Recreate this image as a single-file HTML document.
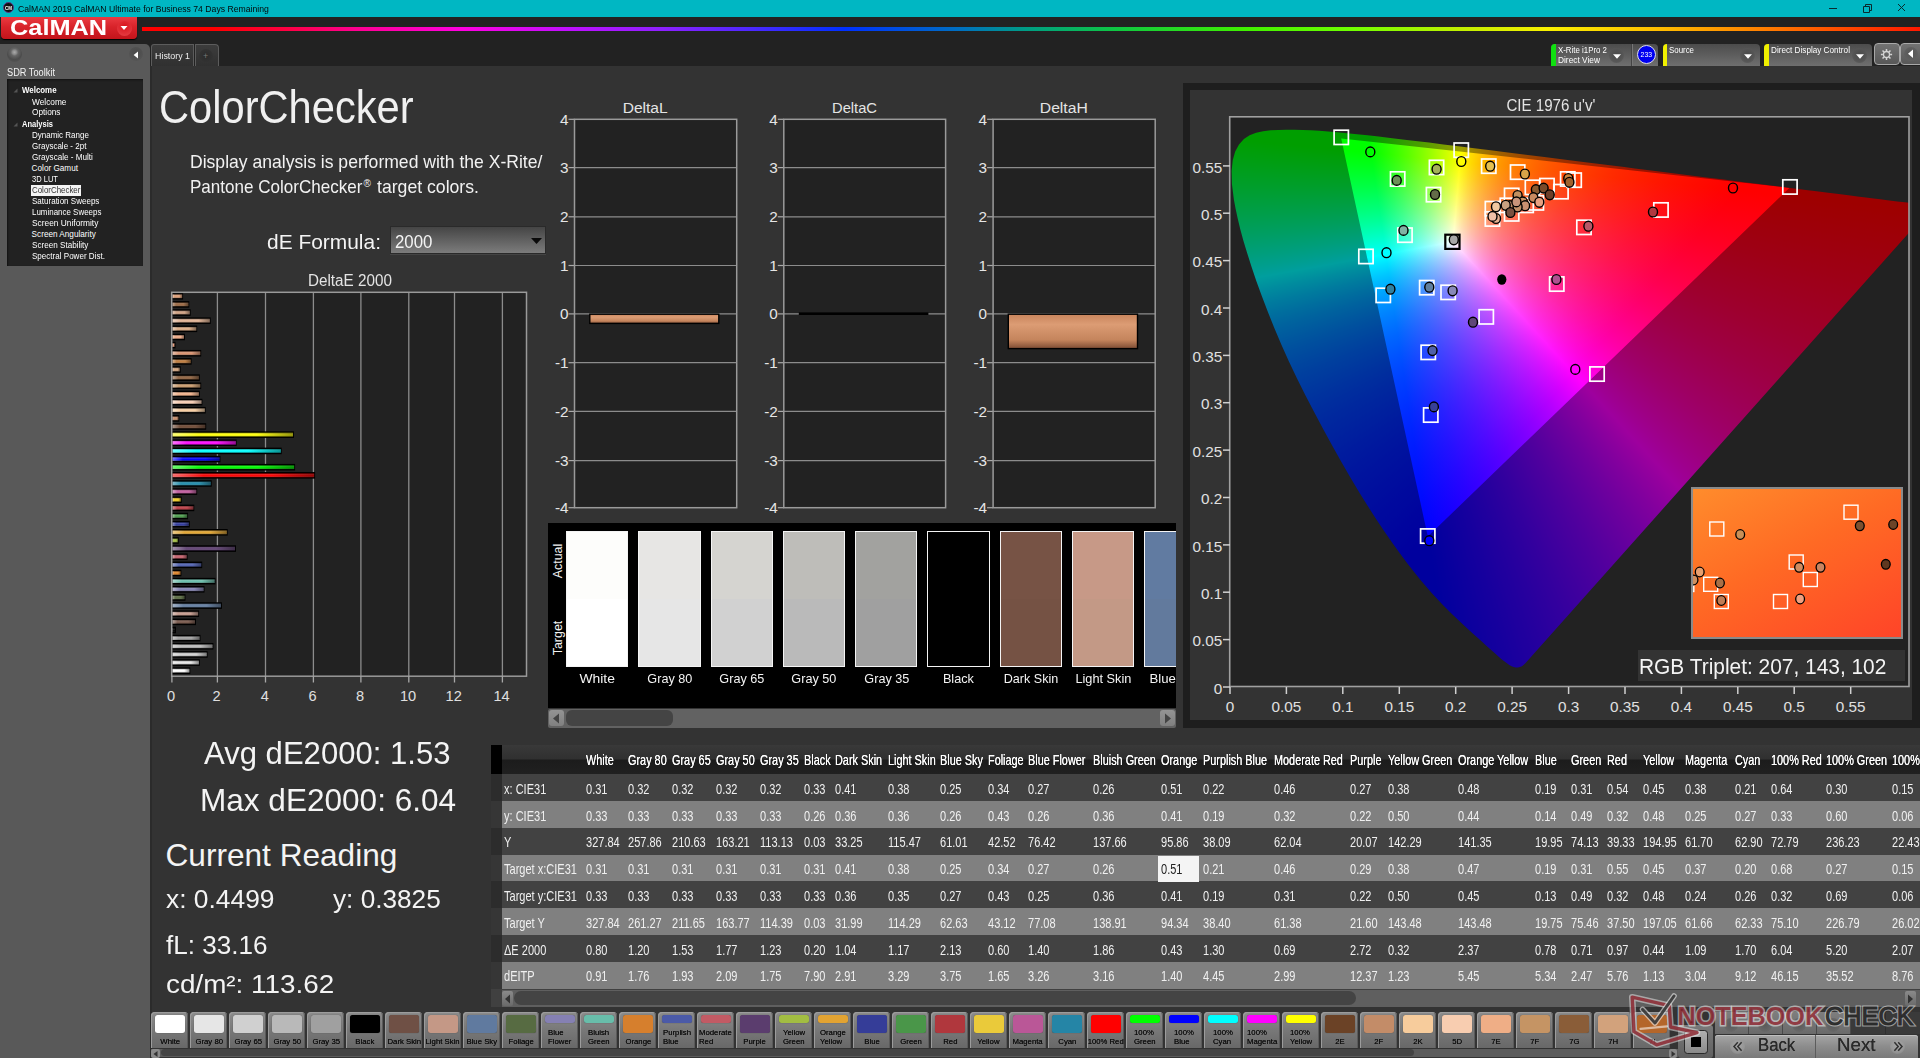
<!DOCTYPE html>
<html lang="en"><head><meta charset="utf-8"><title>CalMAN 2019 - ColorChecker</title>
<style>
html,body{margin:0;padding:0}
body{width:1920px;height:1058px;overflow:hidden;background:#333;font-family:"Liberation Sans",sans-serif;position:relative}
div,span,svg,section,nav,header,aside,button{position:absolute;box-sizing:border-box;margin:0;padding:0}
.t{white-space:nowrap;display:block}
button{border:none;font-family:inherit}
svg text{font-family:"Liberation Sans",sans-serif}
</style></head><body>

<header style="left:0;top:0;width:1920px;height:17px;background:#00b7c3">
<div style="left:3px;top:2px;width:11px;height:11px;border-radius:50%;background:#111;border:1px solid #5a3a8a"></div>
<span class="t" style="left:4.6px;top:6.0px;font-size:5.00px;line-height:5.00px;color:#fff;transform:scaleX(0.900);transform-origin:0 50%;font-weight:bold;">CM</span>
<span class="t" style="left:18.0px;top:5.0px;font-size:9.30px;line-height:9.30px;color:#04090a;transform:scaleX(0.932);transform-origin:0 50%;">CalMAN 2019 CalMAN Ultimate for Business 74 Days Remaining</span>
<svg style="left:1800px;top:0" width="120" height="17" viewBox="0 0 120 17"><g stroke="#0a2a2e" stroke-width="1" fill="none"><path d="M29 8.5h8"/><path d="M63.5 6.5h6v6h-6z M65.5 6.5v-2h6v6h-2"/><path d="M98 4l7 7M105 4l-7 7"/></g></svg>
</header>
<div style="left:0.0px;top:17.0px;width:1920.0px;height:49.0px;background:#222"></div>
<div class="logo" style="left:1.0px;top:17.0px;width:136.0px;height:22.0px;background:linear-gradient(#ea3b41,#d8232a 45%,#c3141b);border-radius:0 0 4px 4px;box-shadow:0 1px 1px #000"></div>
<span class="t" style="left:9.8px;top:17.2px;font-size:22.40px;line-height:22.40px;color:#fff;transform:scaleX(1.132);transform-origin:0 50%;font-weight:bold;">CalMAN</span>
<div style="left:116.5px;top:20.5px;width:15.0px;height:15.0px;border-radius:50%;background:radial-gradient(circle at 50% 35%,#d8141c,#e8444a)"></div>
<svg style="left:120px;top:25px" width="8" height="6"><path d="M0.5 1h7l-3.5 4z" fill="#fff"/></svg>
<div style="left:142.0px;top:26.5px;width:1778.0px;height:4.0px;background:linear-gradient(90deg,#ff0000 0%,#ff0000 4%,#ff0040 8%,#ff0090 12%,#ff00e0 18%,#c010ff 24%,#9020ff 29%,#5028ff 34%,#0030ff 39.5%,#0070c0 46%,#00a080 50%,#10c840 55%,#40f000 62%,#70ff00 68%,#c0f000 74%,#f8f000 79%,#ffc000 85%,#ff8000 91%,#ff1800 100%)"></div>
<aside style="left:0;top:44px;width:149.5px;height:1014px;background:#595959;border-radius:0 5px 0 0">
<div style="left:6.5px;top:3.0px;width:15.0px;height:15.0px;border-radius:50%;background:radial-gradient(circle at 50% 35%,#aaa 0,#8a8a8a 18%,#666 30%,#4c4c4c 60%,#5a5a5a 100%)"></div>
<div style="left:128.5px;top:3.4px;width:14.0px;height:14.0px;border-radius:50%;background:radial-gradient(circle at 50% 40%,#4a4a4a,#545454 70%,#5a5a5a)"></div>
<svg style="left:133px;top:6.6px" width="6" height="9"><path d="M5 0.6v7L0.6 4.1z" fill="#fff"/></svg>
</aside>
<span class="t" style="left:6.5px;top:67.5px;font-size:10.00px;line-height:10.00px;color:#f2f2f2;transform:scaleX(0.922);transform-origin:0 50%;">SDR Toolkit</span>
<div style="left:7.0px;top:78.8px;width:136.0px;height:187.7px;background:#222;box-shadow:inset 1px 1px 2px #111"></div>
<span class="t" style="left:21.6px;top:86.7px;font-size:8.20px;line-height:8.20px;color:#fff;transform:scaleX(0.965);transform-origin:0 50%;font-weight:bold;">Welcome</span>
<span class="t" style="left:31.6px;top:98.6px;font-size:8.20px;line-height:8.20px;color:#fff;transform:scaleX(1.014);transform-origin:0 50%;">Welcome</span>
<span class="t" style="left:31.6px;top:109.3px;font-size:8.20px;line-height:8.20px;color:#fff;transform:scaleX(1.008);transform-origin:0 50%;">Options</span>
<span class="t" style="left:21.6px;top:120.5px;font-size:8.20px;line-height:8.20px;color:#fff;transform:scaleX(0.919);transform-origin:0 50%;font-weight:bold;">Analysis</span>
<span class="t" style="left:31.6px;top:132.3px;font-size:8.20px;line-height:8.20px;color:#fff;transform:scaleX(0.977);transform-origin:0 50%;">Dynamic Range</span>
<span class="t" style="left:31.6px;top:143.1px;font-size:8.20px;line-height:8.20px;color:#fff;transform:scaleX(0.980);transform-origin:0 50%;">Grayscale - 2pt</span>
<span class="t" style="left:31.6px;top:154.2px;font-size:8.20px;line-height:8.20px;color:#fff;transform:scaleX(0.992);transform-origin:0 50%;">Grayscale - Multi</span>
<span class="t" style="left:31.6px;top:165.3px;font-size:8.20px;line-height:8.20px;color:#fff;">Color Gamut</span>
<span class="t" style="left:31.6px;top:176.0px;font-size:8.20px;line-height:8.20px;color:#fff;transform:scaleX(0.920);transform-origin:0 50%;">3D LUT</span>
<div style="left:30.5px;top:185.0px;width:50.0px;height:11.0px;background:#f4f4f4"></div>
<span class="t" style="left:31.8px;top:187.1px;font-size:8.20px;line-height:8.20px;color:#333;transform:scaleX(0.967);transform-origin:0 50%;">ColorChecker</span>
<span class="t" style="left:31.6px;top:198.4px;font-size:8.20px;line-height:8.20px;color:#fff;transform:scaleX(0.980);transform-origin:0 50%;">Saturation Sweeps</span>
<span class="t" style="left:31.6px;top:208.9px;font-size:8.20px;line-height:8.20px;color:#fff;transform:scaleX(0.971);transform-origin:0 50%;">Luminance Sweeps</span>
<span class="t" style="left:31.6px;top:220.2px;font-size:8.20px;line-height:8.20px;color:#fff;transform:scaleX(1.020);transform-origin:0 50%;">Screen Uniformity</span>
<span class="t" style="left:31.6px;top:231.2px;font-size:8.20px;line-height:8.20px;color:#fff;">Screen Angularity</span>
<span class="t" style="left:31.6px;top:242.1px;font-size:8.20px;line-height:8.20px;color:#fff;transform:scaleX(0.992);transform-origin:0 50%;">Screen Stability</span>
<span class="t" style="left:31.6px;top:253.4px;font-size:8.20px;line-height:8.20px;color:#fff;transform:scaleX(0.983);transform-origin:0 50%;">Spectral Power Dist.</span>
<svg style="left:13px;top:88.2px" width="5" height="5"><path d="M4.5 0.5v4h-4z" fill="#555"/></svg>
<svg style="left:13px;top:122.0px" width="5" height="5"><path d="M4.5 0.5v4h-4z" fill="#555"/></svg>
<div style="left:151.0px;top:43.5px;width:43.0px;height:22.5px;background:linear-gradient(#3c3c3c,#303030);border-radius:3px 0 0 0;border:1px solid #5c5c5c;border-bottom:none"></div>
<span class="t" style="left:154.5px;top:51.8px;font-size:8.60px;line-height:8.60px;color:#eee;transform:scaleX(1.032);transform-origin:0 50%;">History 1</span>
<div style="left:194.5px;top:43.5px;width:24.0px;height:22.5px;background:linear-gradient(#3c3c3c,#303030);border-radius:0 4px 0 0;border:1px solid #5c5c5c;border-bottom:none"></div>
<div style="left:198.5px;top:49.0px;width:14.0px;height:14.0px;border-radius:50%;background:radial-gradient(circle,#2a2a2a,#333 70%,#363636)"></div>
<span class="t" style="left:202.9px;top:51.7px;font-size:9.00px;line-height:9.00px;color:#777;">+</span>
<div style="left:1551.3px;top:43.6px;width:106.7px;height:22.4px;background:linear-gradient(#4c4c4c,#6f6f6f);border-radius:4px 4px 0 0;overflow:hidden"><div style="left:0;top:0;width:4.5px;height:23px;background:#10e010"></div></div>
<span class="t" style="left:1557.6px;top:45.8px;font-size:8.60px;line-height:8.60px;color:#fff;transform:scaleX(0.915);transform-origin:0 50%;">X-Rite i1Pro 2</span>
<span class="t" style="left:1557.6px;top:55.8px;font-size:8.60px;line-height:8.60px;color:#fff;transform:scaleX(0.969);transform-origin:0 50%;">Direct View</span>
<div style="left:1609.0px;top:48.0px;width:15.0px;height:15.0px;border-radius:50%;background:radial-gradient(circle at 50% 45%,#4a4a4a,#565656 60%,#666 100%)"></div>
<svg style="left:1612.5px;top:53.5px" width="8" height="5"><path d="M0 0.3h8l-4 4.5z" fill="#fff"/></svg>
<div style="left:1631.0px;top:44.0px;width:1.0px;height:22.0px;background:#444;box-shadow:1px 0 0 #777"></div>
<div style="left:1636.7px;top:45.2px;width:19.2px;height:19.2px;border-radius:50%;background:#0000f0;border:1px solid #dde"></div>
<span class="t" style="left:1640.0px;top:51.2px;font-size:7.60px;line-height:7.60px;color:#fff;transform:scaleX(0.907);transform-origin:50% 50%;">233</span>
<div style="left:1662.5px;top:43.6px;width:97.5px;height:22.4px;background:linear-gradient(#4c4c4c,#6f6f6f);border-radius:4px 4px 0 0;overflow:hidden"><div style="left:0;top:0;width:4.5px;height:23px;background:#f0f000"></div></div>
<span class="t" style="left:1668.8px;top:45.8px;font-size:8.60px;line-height:8.60px;color:#fff;transform:scaleX(0.918);transform-origin:0 50%;">Source</span>
<div style="left:1740.0px;top:48.0px;width:15.0px;height:15.0px;border-radius:50%;background:radial-gradient(circle at 50% 45%,#4a4a4a,#565656 60%,#666 100%)"></div>
<svg style="left:1743.5px;top:53.5px" width="8" height="5"><path d="M0 0.3h8l-4 4.5z" fill="#fff"/></svg>
<div style="left:1764.2px;top:43.6px;width:108.0px;height:22.4px;background:linear-gradient(#4c4c4c,#6f6f6f);border-radius:4px 4px 0 0;overflow:hidden"><div style="left:0;top:0;width:4.5px;height:23px;background:#f0f000"></div></div>
<span class="t" style="left:1770.5px;top:45.8px;font-size:8.60px;line-height:8.60px;color:#fff;transform:scaleX(0.950);transform-origin:0 50%;">Direct Display Control</span>
<div style="left:1852.3px;top:48.0px;width:15.0px;height:15.0px;border-radius:50%;background:radial-gradient(circle at 50% 45%,#4a4a4a,#565656 60%,#666 100%)"></div>
<svg style="left:1855.8px;top:53.5px" width="8" height="5"><path d="M0 0.3h8l-4 4.5z" fill="#fff"/></svg>
<div style="left:1874.0px;top:43.3px;width:25.5px;height:21.7px;background:linear-gradient(#727272,#585858);border:1px solid #a8a8a8;border-radius:4px"></div>
<svg style="left:1880px;top:47.5px" width="13" height="13" viewBox="-6.5 -6.5 13 13"><g fill="none" stroke="#d4d4d4"><circle r="3" stroke-width="1.3"/><g stroke-width="1.5"><path d="M0-3.6v-2M0 3.6v2M-3.6 0h-2M3.6 0h2M2.55 2.55l1.4 1.4M-2.55 2.55l-1.4 1.4M2.55-2.55l1.4-1.4M-2.55-2.55l-1.4-1.4"/></g></g></svg>
<div style="left:1900.0px;top:43.3px;width:25.5px;height:21.7px;background:linear-gradient(#727272,#585858);border:1px solid #a8a8a8;border-radius:4px"></div>
<div style="left:1904.0px;top:47.0px;width:14.0px;height:14.0px;border-radius:50%;background:radial-gradient(circle,#555,#606060 70%,#686868)"></div>
<svg style="left:1907px;top:49px" width="7" height="10"><path d="M6 0.5v8.5L1 4.7z" fill="#fff"/></svg>
<section class="main" style="left:150.0px;top:66.0px;width:1770.0px;height:992.0px;background:#333"></section>
<div style="left:150.0px;top:66.0px;width:1.5px;height:992.0px;background:#2b2b2b"></div>
<span class="t" style="left:158.5px;top:84.2px;font-size:46.80px;line-height:46.80px;color:#f0f0f0;transform:scaleX(0.890);transform-origin:0 50%;">ColorChecker</span>
<span class="t" style="left:190.2px;top:153.1px;font-size:18.40px;line-height:18.40px;color:#f2f2f2;transform:scaleX(0.955);transform-origin:0 50%;">Display analysis is performed with the X-Rite/</span>
<span class="t" style="left:190.2px;top:178.3px;font-size:18.40px;line-height:18.40px;color:#f2f2f2;transform:scaleX(0.927);transform-origin:0 50%;">Pantone ColorChecker</span>
<span class="t" style="left:363.4px;top:179.1px;font-size:10.00px;line-height:10.00px;color:#f2f2f2;">®</span>
<span class="t" style="left:376.5px;top:178.3px;font-size:18.40px;line-height:18.40px;color:#f2f2f2;transform:scaleX(0.959);transform-origin:0 50%;">target colors.</span>
<span class="t" style="left:267.0px;top:231.7px;font-size:20.40px;line-height:20.40px;color:#f4f4f4;transform:scaleX(1.026);transform-origin:0 50%;">dE Formula:</span>
<div style="left:390.4px;top:226.0px;width:156.0px;height:28.3px;background:linear-gradient(#454545,#7c7c7c);border:1px solid #2a2a2a;box-shadow:0 1px 0 #444"></div>
<span class="t" style="left:395.0px;top:233.1px;font-size:18.80px;line-height:18.80px;color:#f4f4f4;transform:scaleX(0.896);transform-origin:0 50%;">2000</span>
<svg style="left:530.5px;top:237.5px" width="11" height="6"><path d="M0 0h11l-5.5 6z" fill="#0a0a0a"/></svg>
<span class="t" style="left:306.5px;top:273.0px;font-size:15.60px;line-height:15.60px;color:#e4e4e4;transform:scaleX(0.978);transform-origin:50% 50%;">DeltaE 2000</span>
<svg style="left:150px;top:280px" width="400" height="430" viewBox="150 280 400 430">
<defs><linearGradient id="bsh" x1="0" y1="0" x2="0" y2="1"><stop offset="0" stop-color="#000" stop-opacity=".4"/><stop offset=".4" stop-color="#fff" stop-opacity=".12"/><stop offset=".6" stop-color="#fff" stop-opacity="0"/><stop offset="1" stop-color="#000" stop-opacity=".45"/></linearGradient><linearGradient id="bfade" x1="0" y1="0" x2="1" y2="0"><stop offset="0" stop-color="#fff" stop-opacity=".4"/><stop offset=".22" stop-color="#fff" stop-opacity="0"/><stop offset=".7" stop-color="#000" stop-opacity="0"/><stop offset="1" stop-color="#000" stop-opacity=".4"/></linearGradient><filter id="bglow" x="-5%" y="-60%" width="110%" height="220%"><feGaussianBlur stdDeviation=".55"/></filter></defs>
<rect x="171.7" y="292.3" width="354.8" height="383.9" fill="#222"/>
<path d="M217.4 292.3V676.2" stroke="#8c8c8c" stroke-width="1.3"/>
<path d="M265.5 292.3V676.2" stroke="#8c8c8c" stroke-width="1.3"/>
<path d="M313.4 292.3V676.2" stroke="#8c8c8c" stroke-width="1.3"/>
<path d="M360.9 292.3V676.2" stroke="#8c8c8c" stroke-width="1.3"/>
<path d="M408.8 292.3V676.2" stroke="#8c8c8c" stroke-width="1.3"/>
<path d="M454.5 292.3V676.2" stroke="#8c8c8c" stroke-width="1.3"/>
<path d="M502.4 292.3V676.2" stroke="#8c8c8c" stroke-width="1.3"/>
<rect x="172.0" y="667.39" width="18.3" height="6.6" fill="#000" filter="url(#bglow)"/>
<rect x="172.5" y="668.84" width="16.8" height="3.7" fill="#ffffff"/>
<rect x="172.5" y="668.84" width="16.8" height="3.7" fill="url(#bsh)"/>
<rect x="172.5" y="668.84" width="16.8" height="3.7" fill="url(#bfade)"/>
<rect x="172.0" y="659.25" width="27.8" height="6.6" fill="#000" filter="url(#bglow)"/>
<rect x="172.5" y="660.70" width="26.3" height="3.7" fill="#e6e6e6"/>
<rect x="172.5" y="660.70" width="26.3" height="3.7" fill="url(#bsh)"/>
<rect x="172.5" y="660.70" width="26.3" height="3.7" fill="url(#bfade)"/>
<rect x="172.0" y="651.11" width="35.6" height="6.6" fill="#000" filter="url(#bglow)"/>
<rect x="172.5" y="652.56" width="34.1" height="3.7" fill="#d2d2d2"/>
<rect x="172.5" y="652.56" width="34.1" height="3.7" fill="url(#bsh)"/>
<rect x="172.5" y="652.56" width="34.1" height="3.7" fill="url(#bfade)"/>
<rect x="172.0" y="642.97" width="41.4" height="6.6" fill="#000" filter="url(#bglow)"/>
<rect x="172.5" y="644.42" width="39.9" height="3.7" fill="#bcbcbc"/>
<rect x="172.5" y="644.42" width="39.9" height="3.7" fill="url(#bsh)"/>
<rect x="172.5" y="644.42" width="39.9" height="3.7" fill="url(#bfade)"/>
<rect x="172.0" y="634.83" width="28.5" height="6.6" fill="#000" filter="url(#bglow)"/>
<rect x="172.5" y="636.28" width="27.0" height="3.7" fill="#a2a2a2"/>
<rect x="172.5" y="636.28" width="27.0" height="3.7" fill="url(#bsh)"/>
<rect x="172.5" y="636.28" width="27.0" height="3.7" fill="url(#bfade)"/>
<rect x="172.0" y="626.69" width="4.0" height="6.6" fill="#000" filter="url(#bglow)"/>
<rect x="172.5" y="628.14" width="2.5" height="3.7" fill="#000000"/>
<rect x="172.5" y="628.14" width="2.5" height="3.7" fill="url(#bsh)"/>
<rect x="172.5" y="628.14" width="2.5" height="3.7" fill="url(#bfade)"/>
<rect x="172.0" y="618.55" width="24.0" height="6.6" fill="#000" filter="url(#bglow)"/>
<rect x="172.5" y="620.00" width="22.5" height="3.7" fill="#735245"/>
<rect x="172.5" y="620.00" width="22.5" height="3.7" fill="url(#bsh)"/>
<rect x="172.5" y="620.00" width="22.5" height="3.7" fill="url(#bfade)"/>
<rect x="172.0" y="610.41" width="27.1" height="6.6" fill="#000" filter="url(#bglow)"/>
<rect x="172.5" y="611.86" width="25.6" height="3.7" fill="#c4988a"/>
<rect x="172.5" y="611.86" width="25.6" height="3.7" fill="url(#bsh)"/>
<rect x="172.5" y="611.86" width="25.6" height="3.7" fill="url(#bfade)"/>
<rect x="172.0" y="602.27" width="49.9" height="6.6" fill="#000" filter="url(#bglow)"/>
<rect x="172.5" y="603.72" width="48.4" height="3.7" fill="#5f7ba0"/>
<rect x="172.5" y="603.72" width="48.4" height="3.7" fill="url(#bsh)"/>
<rect x="172.5" y="603.72" width="48.4" height="3.7" fill="url(#bfade)"/>
<rect x="172.0" y="594.13" width="13.5" height="6.6" fill="#000" filter="url(#bglow)"/>
<rect x="172.5" y="595.58" width="12.0" height="3.7" fill="#5a6c40"/>
<rect x="172.5" y="595.58" width="12.0" height="3.7" fill="url(#bsh)"/>
<rect x="172.5" y="595.58" width="12.0" height="3.7" fill="url(#bfade)"/>
<rect x="172.0" y="585.99" width="32.5" height="6.6" fill="#000" filter="url(#bglow)"/>
<rect x="172.5" y="587.44" width="31.0" height="3.7" fill="#8482b4"/>
<rect x="172.5" y="587.44" width="31.0" height="3.7" fill="url(#bsh)"/>
<rect x="172.5" y="587.44" width="31.0" height="3.7" fill="url(#bfade)"/>
<rect x="172.0" y="577.85" width="43.5" height="6.6" fill="#000" filter="url(#bglow)"/>
<rect x="172.5" y="579.30" width="42.0" height="3.7" fill="#6cc0ae"/>
<rect x="172.5" y="579.30" width="42.0" height="3.7" fill="url(#bsh)"/>
<rect x="172.5" y="579.30" width="42.0" height="3.7" fill="url(#bfade)"/>
<rect x="172.0" y="569.71" width="9.4" height="6.6" fill="#000" filter="url(#bglow)"/>
<rect x="172.5" y="571.16" width="7.9" height="3.7" fill="#e08428"/>
<rect x="172.5" y="571.16" width="7.9" height="3.7" fill="url(#bsh)"/>
<rect x="172.5" y="571.16" width="7.9" height="3.7" fill="url(#bfade)"/>
<rect x="172.0" y="561.57" width="30.2" height="6.6" fill="#000" filter="url(#bglow)"/>
<rect x="172.5" y="563.02" width="28.7" height="3.7" fill="#4a5cae"/>
<rect x="172.5" y="563.02" width="28.7" height="3.7" fill="url(#bsh)"/>
<rect x="172.5" y="563.02" width="28.7" height="3.7" fill="url(#bfade)"/>
<rect x="172.0" y="553.43" width="15.6" height="6.6" fill="#000" filter="url(#bglow)"/>
<rect x="172.5" y="554.88" width="14.1" height="3.7" fill="#c45c68"/>
<rect x="172.5" y="554.88" width="14.1" height="3.7" fill="url(#bsh)"/>
<rect x="172.5" y="554.88" width="14.1" height="3.7" fill="url(#bfade)"/>
<rect x="172.0" y="545.29" width="64.0" height="6.6" fill="#000" filter="url(#bglow)"/>
<rect x="172.5" y="546.74" width="62.5" height="3.7" fill="#5c3c70"/>
<rect x="172.5" y="546.74" width="62.5" height="3.7" fill="url(#bsh)"/>
<rect x="172.5" y="546.74" width="62.5" height="3.7" fill="url(#bfade)"/>
<rect x="172.0" y="537.15" width="6.8" height="6.6" fill="#000" filter="url(#bglow)"/>
<rect x="172.5" y="538.60" width="5.3" height="3.7" fill="#a4c040"/>
<rect x="172.5" y="538.60" width="5.3" height="3.7" fill="url(#bsh)"/>
<rect x="172.5" y="538.60" width="5.3" height="3.7" fill="url(#bfade)"/>
<rect x="172.0" y="529.01" width="55.7" height="6.6" fill="#000" filter="url(#bglow)"/>
<rect x="172.5" y="530.46" width="54.2" height="3.7" fill="#e4a630"/>
<rect x="172.5" y="530.46" width="54.2" height="3.7" fill="url(#bsh)"/>
<rect x="172.5" y="530.46" width="54.2" height="3.7" fill="url(#bfade)"/>
<rect x="172.0" y="520.87" width="17.8" height="6.6" fill="#000" filter="url(#bglow)"/>
<rect x="172.5" y="522.32" width="16.3" height="3.7" fill="#343ea0"/>
<rect x="172.5" y="522.32" width="16.3" height="3.7" fill="url(#bsh)"/>
<rect x="172.5" y="522.32" width="16.3" height="3.7" fill="url(#bfade)"/>
<rect x="172.0" y="512.73" width="16.1" height="6.6" fill="#000" filter="url(#bglow)"/>
<rect x="172.5" y="514.18" width="14.6" height="3.7" fill="#4c9c4c"/>
<rect x="172.5" y="514.18" width="14.6" height="3.7" fill="url(#bsh)"/>
<rect x="172.5" y="514.18" width="14.6" height="3.7" fill="url(#bfade)"/>
<rect x="172.0" y="504.59" width="22.3" height="6.6" fill="#000" filter="url(#bglow)"/>
<rect x="172.5" y="506.04" width="20.8" height="3.7" fill="#b83840"/>
<rect x="172.5" y="506.04" width="20.8" height="3.7" fill="url(#bsh)"/>
<rect x="172.5" y="506.04" width="20.8" height="3.7" fill="url(#bfade)"/>
<rect x="172.0" y="496.45" width="9.7" height="6.6" fill="#000" filter="url(#bglow)"/>
<rect x="172.5" y="497.90" width="8.2" height="3.7" fill="#f0cc20"/>
<rect x="172.5" y="497.90" width="8.2" height="3.7" fill="url(#bsh)"/>
<rect x="172.5" y="497.90" width="8.2" height="3.7" fill="url(#bfade)"/>
<rect x="172.0" y="488.31" width="25.2" height="6.6" fill="#000" filter="url(#bglow)"/>
<rect x="172.5" y="489.76" width="23.7" height="3.7" fill="#c0589c"/>
<rect x="172.5" y="489.76" width="23.7" height="3.7" fill="url(#bsh)"/>
<rect x="172.5" y="489.76" width="23.7" height="3.7" fill="url(#bfade)"/>
<rect x="172.0" y="480.17" width="39.7" height="6.6" fill="#000" filter="url(#bglow)"/>
<rect x="172.5" y="481.62" width="38.2" height="3.7" fill="#1c8cac"/>
<rect x="172.5" y="481.62" width="38.2" height="3.7" fill="url(#bsh)"/>
<rect x="172.5" y="481.62" width="38.2" height="3.7" fill="url(#bfade)"/>
<rect x="172.0" y="472.03" width="143.1" height="6.6" fill="#000" filter="url(#bglow)"/>
<rect x="172.5" y="473.48" width="141.6" height="3.7" fill="#ff0000"/>
<rect x="172.5" y="473.48" width="141.6" height="3.7" fill="url(#bsh)"/>
<rect x="172.5" y="473.48" width="141.6" height="3.7" fill="url(#bfade)"/>
<rect x="172.0" y="463.89" width="123.1" height="6.6" fill="#000" filter="url(#bglow)"/>
<rect x="172.5" y="465.34" width="121.6" height="3.7" fill="#00ff00"/>
<rect x="172.5" y="465.34" width="121.6" height="3.7" fill="url(#bsh)"/>
<rect x="172.5" y="465.34" width="121.6" height="3.7" fill="url(#bfade)"/>
<rect x="172.0" y="455.75" width="48.5" height="6.6" fill="#000" filter="url(#bglow)"/>
<rect x="172.5" y="457.20" width="47.0" height="3.7" fill="#0000ff"/>
<rect x="172.5" y="457.20" width="47.0" height="3.7" fill="url(#bsh)"/>
<rect x="172.5" y="457.20" width="47.0" height="3.7" fill="url(#bfade)"/>
<rect x="172.0" y="447.61" width="109.7" height="6.6" fill="#000" filter="url(#bglow)"/>
<rect x="172.5" y="449.06" width="108.2" height="3.7" fill="#00ffff"/>
<rect x="172.5" y="449.06" width="108.2" height="3.7" fill="url(#bsh)"/>
<rect x="172.5" y="449.06" width="108.2" height="3.7" fill="url(#bfade)"/>
<rect x="172.0" y="439.47" width="64.7" height="6.6" fill="#000" filter="url(#bglow)"/>
<rect x="172.5" y="440.92" width="63.2" height="3.7" fill="#ff00ff"/>
<rect x="172.5" y="440.92" width="63.2" height="3.7" fill="url(#bsh)"/>
<rect x="172.5" y="440.92" width="63.2" height="3.7" fill="url(#bfade)"/>
<rect x="172.0" y="431.33" width="121.9" height="6.6" fill="#000" filter="url(#bglow)"/>
<rect x="172.5" y="432.78" width="120.4" height="3.7" fill="#ffff00"/>
<rect x="172.5" y="432.78" width="120.4" height="3.7" fill="url(#bsh)"/>
<rect x="172.5" y="432.78" width="120.4" height="3.7" fill="url(#bfade)"/>
<rect x="172.0" y="423.19" width="34.2" height="6.6" fill="#000" filter="url(#bglow)"/>
<rect x="172.5" y="424.64" width="32.7" height="3.7" fill="#6e4630"/>
<rect x="172.5" y="424.64" width="32.7" height="3.7" fill="url(#bsh)"/>
<rect x="172.5" y="424.64" width="32.7" height="3.7" fill="url(#bfade)"/>
<rect x="172.0" y="415.05" width="7.3" height="6.6" fill="#000" filter="url(#bglow)"/>
<rect x="172.5" y="416.50" width="5.8" height="3.7" fill="#c88c68"/>
<rect x="172.5" y="416.50" width="5.8" height="3.7" fill="url(#bsh)"/>
<rect x="172.5" y="416.50" width="5.8" height="3.7" fill="url(#bfade)"/>
<rect x="172.0" y="406.91" width="33.7" height="6.6" fill="#000" filter="url(#bglow)"/>
<rect x="172.5" y="408.36" width="32.2" height="3.7" fill="#f8cfa4"/>
<rect x="172.5" y="408.36" width="32.2" height="3.7" fill="url(#bsh)"/>
<rect x="172.5" y="408.36" width="32.2" height="3.7" fill="url(#bfade)"/>
<rect x="172.0" y="398.77" width="30.4" height="6.6" fill="#000" filter="url(#bglow)"/>
<rect x="172.5" y="400.22" width="28.9" height="3.7" fill="#f8ceb4"/>
<rect x="172.5" y="400.22" width="28.9" height="3.7" fill="url(#bsh)"/>
<rect x="172.5" y="400.22" width="28.9" height="3.7" fill="url(#bfade)"/>
<rect x="172.0" y="390.63" width="27.8" height="6.6" fill="#000" filter="url(#bglow)"/>
<rect x="172.5" y="392.08" width="26.3" height="3.7" fill="#f0b088"/>
<rect x="172.5" y="392.08" width="26.3" height="3.7" fill="url(#bsh)"/>
<rect x="172.5" y="392.08" width="26.3" height="3.7" fill="url(#bfade)"/>
<rect x="172.0" y="382.49" width="29.2" height="6.6" fill="#000" filter="url(#bglow)"/>
<rect x="172.5" y="383.94" width="27.7" height="3.7" fill="#c89868"/>
<rect x="172.5" y="383.94" width="27.7" height="3.7" fill="url(#bsh)"/>
<rect x="172.5" y="383.94" width="27.7" height="3.7" fill="url(#bfade)"/>
<rect x="172.0" y="374.35" width="27.8" height="6.6" fill="#000" filter="url(#bglow)"/>
<rect x="172.5" y="375.80" width="26.3" height="3.7" fill="#8c5e3a"/>
<rect x="172.5" y="375.80" width="26.3" height="3.7" fill="url(#bsh)"/>
<rect x="172.5" y="375.80" width="26.3" height="3.7" fill="url(#bfade)"/>
<rect x="172.0" y="366.21" width="8.7" height="6.6" fill="#000" filter="url(#bglow)"/>
<rect x="172.5" y="367.66" width="7.2" height="3.7" fill="#d4a47c"/>
<rect x="172.5" y="367.66" width="7.2" height="3.7" fill="url(#bsh)"/>
<rect x="172.5" y="367.66" width="7.2" height="3.7" fill="url(#bfade)"/>
<rect x="172.0" y="358.07" width="19.6" height="6.6" fill="#000" filter="url(#bglow)"/>
<rect x="172.5" y="359.52" width="18.1" height="3.7" fill="#c07c3c"/>
<rect x="172.5" y="359.52" width="18.1" height="3.7" fill="url(#bsh)"/>
<rect x="172.5" y="359.52" width="18.1" height="3.7" fill="url(#bfade)"/>
<rect x="172.0" y="349.93" width="29.2" height="6.6" fill="#000" filter="url(#bglow)"/>
<rect x="172.5" y="351.38" width="27.7" height="3.7" fill="#dc9470"/>
<rect x="172.5" y="351.38" width="27.7" height="3.7" fill="url(#bsh)"/>
<rect x="172.5" y="351.38" width="27.7" height="3.7" fill="url(#bfade)"/>
<rect x="172.0" y="341.79" width="3.5" height="6.6" fill="#000" filter="url(#bglow)"/>
<rect x="172.5" y="343.24" width="2.0" height="3.7" fill="#e89a78"/>
<rect x="172.5" y="343.24" width="2.0" height="3.7" fill="url(#bsh)"/>
<rect x="172.5" y="343.24" width="2.0" height="3.7" fill="url(#bfade)"/>
<rect x="172.0" y="333.65" width="13.0" height="6.6" fill="#000" filter="url(#bglow)"/>
<rect x="172.5" y="335.10" width="11.5" height="3.7" fill="#eca884"/>
<rect x="172.5" y="335.10" width="11.5" height="3.7" fill="url(#bsh)"/>
<rect x="172.5" y="335.10" width="11.5" height="3.7" fill="url(#bfade)"/>
<rect x="172.0" y="325.51" width="25.2" height="6.6" fill="#000" filter="url(#bglow)"/>
<rect x="172.5" y="326.96" width="23.7" height="3.7" fill="#d8a880"/>
<rect x="172.5" y="326.96" width="23.7" height="3.7" fill="url(#bsh)"/>
<rect x="172.5" y="326.96" width="23.7" height="3.7" fill="url(#bfade)"/>
<rect x="172.0" y="317.37" width="38.7" height="6.6" fill="#000" filter="url(#bglow)"/>
<rect x="172.5" y="318.82" width="37.2" height="3.7" fill="#e0b090"/>
<rect x="172.5" y="318.82" width="37.2" height="3.7" fill="url(#bsh)"/>
<rect x="172.5" y="318.82" width="37.2" height="3.7" fill="url(#bfade)"/>
<rect x="172.0" y="309.23" width="18.7" height="6.6" fill="#000" filter="url(#bglow)"/>
<rect x="172.5" y="310.68" width="17.2" height="3.7" fill="#d0a080"/>
<rect x="172.5" y="310.68" width="17.2" height="3.7" fill="url(#bsh)"/>
<rect x="172.5" y="310.68" width="17.2" height="3.7" fill="url(#bfade)"/>
<rect x="172.0" y="301.09" width="17.3" height="6.6" fill="#000" filter="url(#bglow)"/>
<rect x="172.5" y="302.54" width="15.8" height="3.7" fill="#9c6840"/>
<rect x="172.5" y="302.54" width="15.8" height="3.7" fill="url(#bsh)"/>
<rect x="172.5" y="302.54" width="15.8" height="3.7" fill="url(#bfade)"/>
<rect x="172.0" y="292.95" width="11.1" height="6.6" fill="#000" filter="url(#bglow)"/>
<rect x="172.5" y="294.40" width="9.6" height="3.7" fill="#e0a078"/>
<rect x="172.5" y="294.40" width="9.6" height="3.7" fill="url(#bsh)"/>
<rect x="172.5" y="294.40" width="9.6" height="3.7" fill="url(#bfade)"/>
<rect x="171.7" y="292.3" width="354.8" height="383.9" fill="none" stroke="#9a9a9a" stroke-width="1.5"/>
<path d="M171.9 676.2v6.3" stroke="#a8a8a8" stroke-width="1.3"/>
<text x="171.1" y="700.6" font-size="14.6" fill="#e0e0e0" text-anchor="middle">0</text>
<path d="M217.4 676.2v6.3" stroke="#a8a8a8" stroke-width="1.3"/>
<text x="216.6" y="700.6" font-size="14.6" fill="#e0e0e0" text-anchor="middle">2</text>
<path d="M265.5 676.2v6.3" stroke="#a8a8a8" stroke-width="1.3"/>
<text x="264.7" y="700.6" font-size="14.6" fill="#e0e0e0" text-anchor="middle">4</text>
<path d="M313.4 676.2v6.3" stroke="#a8a8a8" stroke-width="1.3"/>
<text x="312.6" y="700.6" font-size="14.6" fill="#e0e0e0" text-anchor="middle">6</text>
<path d="M360.9 676.2v6.3" stroke="#a8a8a8" stroke-width="1.3"/>
<text x="360.1" y="700.6" font-size="14.6" fill="#e0e0e0" text-anchor="middle">8</text>
<path d="M408.8 676.2v6.3" stroke="#a8a8a8" stroke-width="1.3"/>
<text x="408.0" y="700.6" font-size="14.6" fill="#e0e0e0" text-anchor="middle">10</text>
<path d="M454.5 676.2v6.3" stroke="#a8a8a8" stroke-width="1.3"/>
<text x="453.7" y="700.6" font-size="14.6" fill="#e0e0e0" text-anchor="middle">12</text>
<path d="M502.4 676.2v6.3" stroke="#a8a8a8" stroke-width="1.3"/>
<text x="501.6" y="700.6" font-size="14.6" fill="#e0e0e0" text-anchor="middle">14</text>
</svg>
<svg style="left:548px;top:95px" width="630" height="425" viewBox="548 95 630 425">
<defs><linearGradient id="skin" x1="0" y1="0" x2="0" y2="1"><stop offset="0" stop-color="#c8845c"/><stop offset=".3" stop-color="#dc9c74"/><stop offset=".75" stop-color="#c4845c"/><stop offset="1" stop-color="#7c4c34"/></linearGradient></defs>
<rect x="574.5" y="119.3" width="162.2" height="388.4" fill="#222"/>
<path d="M568.5 119.3h6" stroke="#aaa" stroke-width="1.2"/>
<text x="568.5" y="124.8" font-size="15.3" fill="#e6e6e6" text-anchor="end">4</text>
<path d="M574.5 167.6H736.7" stroke="#8c8c8c" stroke-width="1.2"/>
<path d="M568.5 167.6h6" stroke="#aaa" stroke-width="1.2"/>
<text x="568.5" y="173.1" font-size="15.3" fill="#e6e6e6" text-anchor="end">3</text>
<path d="M574.5 216.8H736.7" stroke="#8c8c8c" stroke-width="1.2"/>
<path d="M568.5 216.8h6" stroke="#aaa" stroke-width="1.2"/>
<text x="568.5" y="222.3" font-size="15.3" fill="#e6e6e6" text-anchor="end">2</text>
<path d="M574.5 265.5H736.7" stroke="#8c8c8c" stroke-width="1.2"/>
<path d="M568.5 265.5h6" stroke="#aaa" stroke-width="1.2"/>
<text x="568.5" y="271.0" font-size="15.3" fill="#e6e6e6" text-anchor="end">1</text>
<path d="M574.5 313.9H736.7" stroke="#8c8c8c" stroke-width="1.2"/>
<path d="M568.5 313.9h6" stroke="#aaa" stroke-width="1.2"/>
<text x="568.5" y="319.4" font-size="15.3" fill="#e6e6e6" text-anchor="end">0</text>
<path d="M574.5 362.7H736.7" stroke="#8c8c8c" stroke-width="1.2"/>
<path d="M568.5 362.7h6" stroke="#aaa" stroke-width="1.2"/>
<text x="568.5" y="368.2" font-size="15.3" fill="#e6e6e6" text-anchor="end">-1</text>
<path d="M574.5 411.4H736.7" stroke="#8c8c8c" stroke-width="1.2"/>
<path d="M568.5 411.4h6" stroke="#aaa" stroke-width="1.2"/>
<text x="568.5" y="416.9" font-size="15.3" fill="#e6e6e6" text-anchor="end">-2</text>
<path d="M574.5 460.6H736.7" stroke="#8c8c8c" stroke-width="1.2"/>
<path d="M568.5 460.6h6" stroke="#aaa" stroke-width="1.2"/>
<text x="568.5" y="466.1" font-size="15.3" fill="#e6e6e6" text-anchor="end">-3</text>
<path d="M568.5 507.7h6" stroke="#aaa" stroke-width="1.2"/>
<text x="568.5" y="513.2" font-size="15.3" fill="#e6e6e6" text-anchor="end">-4</text>
<rect x="574.5" y="119.3" width="162.2" height="388.4" fill="none" stroke="#9a9a9a" stroke-width="1.5"/>
<rect x="589.8" y="314.2" width="129" height="9.2" fill="url(#skin)" stroke="#000" stroke-width="1.4"/>
<text x="645.2" y="112.5" font-size="15.4" fill="#e4e4e4" text-anchor="middle" textLength="45" lengthAdjust="spacingAndGlyphs">DeltaL</text>
<rect x="783.8" y="119.3" width="161.8" height="388.4" fill="#222"/>
<path d="M777.8 119.3h6" stroke="#aaa" stroke-width="1.2"/>
<text x="777.8" y="124.8" font-size="15.3" fill="#e6e6e6" text-anchor="end">4</text>
<path d="M783.8 167.6H945.6" stroke="#8c8c8c" stroke-width="1.2"/>
<path d="M777.8 167.6h6" stroke="#aaa" stroke-width="1.2"/>
<text x="777.8" y="173.1" font-size="15.3" fill="#e6e6e6" text-anchor="end">3</text>
<path d="M783.8 216.8H945.6" stroke="#8c8c8c" stroke-width="1.2"/>
<path d="M777.8 216.8h6" stroke="#aaa" stroke-width="1.2"/>
<text x="777.8" y="222.3" font-size="15.3" fill="#e6e6e6" text-anchor="end">2</text>
<path d="M783.8 265.5H945.6" stroke="#8c8c8c" stroke-width="1.2"/>
<path d="M777.8 265.5h6" stroke="#aaa" stroke-width="1.2"/>
<text x="777.8" y="271.0" font-size="15.3" fill="#e6e6e6" text-anchor="end">1</text>
<path d="M783.8 313.9H945.6" stroke="#8c8c8c" stroke-width="1.2"/>
<path d="M777.8 313.9h6" stroke="#aaa" stroke-width="1.2"/>
<text x="777.8" y="319.4" font-size="15.3" fill="#e6e6e6" text-anchor="end">0</text>
<path d="M783.8 362.7H945.6" stroke="#8c8c8c" stroke-width="1.2"/>
<path d="M777.8 362.7h6" stroke="#aaa" stroke-width="1.2"/>
<text x="777.8" y="368.2" font-size="15.3" fill="#e6e6e6" text-anchor="end">-1</text>
<path d="M783.8 411.4H945.6" stroke="#8c8c8c" stroke-width="1.2"/>
<path d="M777.8 411.4h6" stroke="#aaa" stroke-width="1.2"/>
<text x="777.8" y="416.9" font-size="15.3" fill="#e6e6e6" text-anchor="end">-2</text>
<path d="M783.8 460.6H945.6" stroke="#8c8c8c" stroke-width="1.2"/>
<path d="M777.8 460.6h6" stroke="#aaa" stroke-width="1.2"/>
<text x="777.8" y="466.1" font-size="15.3" fill="#e6e6e6" text-anchor="end">-3</text>
<path d="M777.8 507.7h6" stroke="#aaa" stroke-width="1.2"/>
<text x="777.8" y="513.2" font-size="15.3" fill="#e6e6e6" text-anchor="end">-4</text>
<rect x="783.8" y="119.3" width="161.8" height="388.4" fill="none" stroke="#9a9a9a" stroke-width="1.5"/>
<rect x="798.8" y="312.4" width="129.6" height="2.6" fill="#000"/>
<text x="854.5" y="112.5" font-size="15.4" fill="#e4e4e4" text-anchor="middle" textLength="45" lengthAdjust="spacingAndGlyphs">DeltaC</text>
<rect x="993.1" y="119.3" width="162.1" height="388.4" fill="#222"/>
<path d="M987.1 119.3h6" stroke="#aaa" stroke-width="1.2"/>
<text x="987.1" y="124.8" font-size="15.3" fill="#e6e6e6" text-anchor="end">4</text>
<path d="M993.1 167.6H1155.2" stroke="#8c8c8c" stroke-width="1.2"/>
<path d="M987.1 167.6h6" stroke="#aaa" stroke-width="1.2"/>
<text x="987.1" y="173.1" font-size="15.3" fill="#e6e6e6" text-anchor="end">3</text>
<path d="M993.1 216.8H1155.2" stroke="#8c8c8c" stroke-width="1.2"/>
<path d="M987.1 216.8h6" stroke="#aaa" stroke-width="1.2"/>
<text x="987.1" y="222.3" font-size="15.3" fill="#e6e6e6" text-anchor="end">2</text>
<path d="M993.1 265.5H1155.2" stroke="#8c8c8c" stroke-width="1.2"/>
<path d="M987.1 265.5h6" stroke="#aaa" stroke-width="1.2"/>
<text x="987.1" y="271.0" font-size="15.3" fill="#e6e6e6" text-anchor="end">1</text>
<path d="M993.1 313.9H1155.2" stroke="#8c8c8c" stroke-width="1.2"/>
<path d="M987.1 313.9h6" stroke="#aaa" stroke-width="1.2"/>
<text x="987.1" y="319.4" font-size="15.3" fill="#e6e6e6" text-anchor="end">0</text>
<path d="M993.1 362.7H1155.2" stroke="#8c8c8c" stroke-width="1.2"/>
<path d="M987.1 362.7h6" stroke="#aaa" stroke-width="1.2"/>
<text x="987.1" y="368.2" font-size="15.3" fill="#e6e6e6" text-anchor="end">-1</text>
<path d="M993.1 411.4H1155.2" stroke="#8c8c8c" stroke-width="1.2"/>
<path d="M987.1 411.4h6" stroke="#aaa" stroke-width="1.2"/>
<text x="987.1" y="416.9" font-size="15.3" fill="#e6e6e6" text-anchor="end">-2</text>
<path d="M993.1 460.6H1155.2" stroke="#8c8c8c" stroke-width="1.2"/>
<path d="M987.1 460.6h6" stroke="#aaa" stroke-width="1.2"/>
<text x="987.1" y="466.1" font-size="15.3" fill="#e6e6e6" text-anchor="end">-3</text>
<path d="M987.1 507.7h6" stroke="#aaa" stroke-width="1.2"/>
<text x="987.1" y="513.2" font-size="15.3" fill="#e6e6e6" text-anchor="end">-4</text>
<rect x="993.1" y="119.3" width="162.1" height="388.4" fill="none" stroke="#9a9a9a" stroke-width="1.5"/>
<rect x="1008.3" y="314.2" width="129.2" height="34.4" fill="url(#skin)" stroke="#000" stroke-width="1.4"/>
<text x="1063.8" y="112.5" font-size="15.4" fill="#e4e4e4" text-anchor="middle" textLength="48" lengthAdjust="spacingAndGlyphs">DeltaH</text>
</svg>
<div style="left:548px;top:523.3px;width:628px;height:185px;background:#000;overflow:hidden">
<div style="left:18.0px;top:7.4px;width:62.4px;height:136px;border:1px solid #f4f4f4;background:linear-gradient(#fdfdfb 0,#fdfdfb 50%,#ffffff 50%,#ffffff 100%)"></div>
<span class="t" style="left:32.2px;top:149.0px;font-size:13.40px;line-height:13.40px;color:#f4f4f4;transform:scaleX(1.036);transform-origin:50% 50%;">White</span>
<div style="left:90.2px;top:7.4px;width:62.4px;height:136px;border:1px solid #f4f4f4;background:linear-gradient(#e7e6e4 0,#e7e6e4 50%,#e6e6e6 50%,#e6e6e6 100%)"></div>
<span class="t" style="left:97.7px;top:149.0px;font-size:13.40px;line-height:13.40px;color:#f4f4f4;transform:scaleX(0.944);transform-origin:50% 50%;">Gray 80</span>
<div style="left:162.5px;top:7.4px;width:62.4px;height:136px;border:1px solid #f4f4f4;background:linear-gradient(#d5d4d0 0,#d5d4d0 50%,#d1d1d1 50%,#d1d1d1 100%)"></div>
<span class="t" style="left:170.0px;top:149.0px;font-size:13.40px;line-height:13.40px;color:#f4f4f4;transform:scaleX(0.944);transform-origin:50% 50%;">Gray 65</span>
<div style="left:234.8px;top:7.4px;width:62.4px;height:136px;border:1px solid #f4f4f4;background:linear-gradient(#bebdb9 0,#bebdb9 50%,#bababa 50%,#bababa 100%)"></div>
<span class="t" style="left:242.2px;top:149.0px;font-size:13.40px;line-height:13.40px;color:#f4f4f4;transform:scaleX(0.944);transform-origin:50% 50%;">Gray 50</span>
<div style="left:307.0px;top:7.4px;width:62.4px;height:136px;border:1px solid #f4f4f4;background:linear-gradient(#a2a29f 0,#a2a29f 50%,#a0a0a0 50%,#a0a0a0 100%)"></div>
<span class="t" style="left:314.5px;top:149.0px;font-size:13.40px;line-height:13.40px;color:#f4f4f4;transform:scaleX(0.944);transform-origin:50% 50%;">Gray 35</span>
<div style="left:379.2px;top:7.4px;width:62.4px;height:136px;border:1px solid #f4f4f4;background:linear-gradient(#000 0,#000 50%,#000 50%,#000 100%)"></div>
<span class="t" style="left:394.2px;top:149.0px;font-size:13.40px;line-height:13.40px;color:#f4f4f4;transform:scaleX(0.946);transform-origin:50% 50%;">Black</span>
<div style="left:451.5px;top:7.4px;width:62.4px;height:136px;border:1px solid #f4f4f4;background:linear-gradient(#775345 0,#775345 50%,#755244 50%,#755244 100%)"></div>
<span class="t" style="left:453.8px;top:149.0px;font-size:13.40px;line-height:13.40px;color:#f4f4f4;transform:scaleX(0.938);transform-origin:50% 50%;">Dark Skin</span>
<div style="left:523.8px;top:7.4px;width:62.4px;height:136px;border:1px solid #f4f4f4;background:linear-gradient(#c79987 0,#c79987 50%,#c39986 50%,#c39986 100%)"></div>
<span class="t" style="left:525.6px;top:149.0px;font-size:13.40px;line-height:13.40px;color:#f4f4f4;transform:scaleX(0.952);transform-origin:50% 50%;">Light Skin</span>
<div style="left:596.0px;top:7.4px;width:62.4px;height:136px;border:1px solid #f4f4f4;background:linear-gradient(#617ba1 0,#617ba1 50%,#627a9d 50%,#627a9d 100%)"></div>
<span class="t" style="left:600.9px;top:149.0px;font-size:13.40px;line-height:13.40px;color:#f4f4f4;transform:scaleX(0.983);transform-origin:50% 50%;">Blue Sky</span>
<span class="t" style="left:-14px;top:30px;width:48px;height:16px;font-size:13.4px;line-height:16px;color:#f4f4f4;transform:rotate(-90deg) scaleX(.93);text-align:center">Actual</span>
<span class="t" style="left:-14px;top:106.5px;width:48px;height:16px;font-size:13.4px;line-height:16px;color:#f4f4f4;transform:rotate(-90deg) scaleX(.93);text-align:center">Target</span>
</div>
<div style="left:548.0px;top:709.0px;width:628.0px;height:18.9px;background:#626262;border-radius:2px"></div>
<div style="left:549.0px;top:710.4px;width:15.0px;height:15.8px;background:linear-gradient(#949494,#808080);border-radius:3px"></div>
<svg style="left:552px;top:713px" width="8" height="11"><path d="M7 0.5v10L1 5.5z" fill="#444"/></svg>
<div style="left:566.3px;top:710.4px;width:106.6px;height:15.6px;background:#444;border-radius:6px"></div>
<div style="left:1160.0px;top:710.4px;width:15.0px;height:15.8px;background:linear-gradient(#949494,#808080);border-radius:3px"></div>
<svg style="left:1164px;top:713px" width="8" height="11"><path d="M1 0.5v10L7 5.5z" fill="#444"/></svg>
<div style="left:1183.0px;top:83.0px;width:737.0px;height:645.0px;background:#1e1e1e"></div>
<div style="left:1190.0px;top:90.0px;width:722.3px;height:630.0px;background:#333"></div>
<span class="t" style="left:1504.8px;top:98.4px;font-size:15.60px;line-height:15.60px;color:#e4e4e4;transform:scaleX(0.969);transform-origin:50% 50%;">CIE 1976 u&#x27;v&#x27;</span>
<div style="left:1230px;top:117px;width:679px;height:570px;background:#222;overflow:hidden">
<div class="locus" style="position:absolute;left:0;top:0;width:679px;height:570px;clip-path:polygon(295.6px 546.0px,293.8px 547.8px,291.9px 549.2px,289.9px 550.1px,287.9px 550.5px,285.8px 550.6px,283.7px 550.1px,281.5px 549.2px,279.3px 547.9px,271.2px 542.1px,264.6px 536.1px,260.0px 531.9px,255.5px 527.9px,249.9px 522.8px,243.6px 517.2px,236.8px 511.0px,229.3px 504.1px,220.9px 496.0px,211.7px 486.7px,201.7px 476.1px,190.5px 463.1px,184.1px 455.1px,177.2px 446.3px,170.0px 436.6px,162.4px 426.1px,154.6px 414.7px,146.4px 402.4px,137.9px 389.3px,129.3px 375.5px,120.5px 360.7px,111.4px 345.0px,102.3px 328.8px,93.4px 312.4px,84.5px 295.7px,75.5px 278.5px,66.9px 261.2px,58.8px 244.3px,51.3px 227.5px,44.2px 210.7px,37.7px 194.4px,31.7px 178.8px,26.3px 164.0px,21.5px 149.7px,17.2px 136.2px,13.4px 123.7px,10.2px 112.1px,7.7px 101.5px,5.6px 91.7px,3.9px 82.7px,1.9px 67.0px,1.6px 54.1px,2.7px 43.3px,5.2px 34.5px,9.0px 27.4px,13.9px 22.0px,19.6px 18.2px,26.1px 15.7px,33.1px 14.2px,40.6px 13.3px,48.4px 12.9px,56.4px 12.8px,64.4px 12.8px,72.5px 13.0px,80.8px 13.3px,89.3px 13.8px,98.2px 14.5px,107.4px 15.3px,117.0px 16.2px,127.1px 17.2px,137.6px 18.3px,148.7px 19.6px,160.3px 20.9px,172.6px 22.4px,185.5px 24.0px,199.1px 25.6px,213.4px 27.4px,228.4px 29.3px,244.2px 31.2px,260.6px 33.3px,277.9px 35.5px,295.8px 37.7px,314.4px 40.1px,333.7px 42.5px,343.5px 43.7px,353.5px 45.0px,363.6px 46.2px,373.8px 47.5px,384.0px 48.8px,394.4px 50.1px,404.8px 51.4px,415.0px 52.7px,425.1px 54.0px,435.1px 55.3px,445.0px 56.5px,454.9px 57.7px,474.6px 60.2px,493.8px 62.6px,511.9px 64.9px,529.0px 67.0px,545.1px 69.0px,560.1px 70.9px,573.9px 72.7px,586.6px 74.3px,598.2px 75.7px,608.8px 77.0px,618.5px 78.3px,627.5px 79.4px,635.9px 80.5px,643.7px 81.5px,650.3px 82.3px,657.4px 83.2px,667.3px 84.4px,677.1px 85.6px,688.8px 87.1px,696.6px 88.1px,702.9px 88.9px);isolation:isolate;background:#000">
<div style="position:absolute;inset:0;mix-blend-mode:lighten;clip-path:polygon(221.9px 125.3px,2252.1px 2333.9px,3174.8px -410.7px,478.2px -2863.7px);background:conic-gradient(from 304.90deg at 197.8px 419.5px,#ffff00 0deg,#ffff00 60.00deg,#ffdd00 61.54deg,#ffc100 63.08deg,#ffaa00 64.62deg,#ff9600 66.16deg,#ff8500 67.70deg,#ff7600 69.24deg,#ff6a00 70.78deg,#ff5e00 72.33deg,#ff5400 73.87deg,#ff4b00 75.41deg,#ff4200 76.95deg,#ff3b00 78.49deg,#ff3400 80.03deg,#ff2d00 81.57deg,#ff2700 83.11deg,#ff2200 84.65deg,#ff1d00 86.19deg,#ff1800 87.73deg,#ff1300 89.27deg,#ff0f00 90.81deg,#ff0b00 92.35deg,#ff0700 93.89deg,#ff0300 95.43deg,#ff0000 96.98deg,#ff0000 360deg)"></div>
<div style="position:absolute;inset:0;mix-blend-mode:lighten;clip-path:polygon(221.9px 125.3px,2252.1px 2333.9px,3174.8px -410.7px,478.2px -2863.7px);background:conic-gradient(from 35.84deg at 140.9px 35.8px,#000000 0deg,#000000 60.00deg,#000007 61.73deg,#00000e 63.46deg,#000015 65.20deg,#00001c 66.93deg,#000023 68.66deg,#00002b 70.39deg,#000033 72.12deg,#00003b 73.86deg,#000043 75.59deg,#00004b 77.32deg,#000054 79.05deg,#00005e 80.78deg,#000067 82.52deg,#000071 84.25deg,#00007c 85.98deg,#000087 87.71deg,#000093 89.44deg,#00009f 91.18deg,#0000ac 92.91deg,#0000bb 94.64deg,#0000ca 96.37deg,#0000da 98.10deg,#0000ec 99.84deg,#0000ff 101.57deg,#0000ff 360deg)"></div>
<div style="position:absolute;inset:0;mix-blend-mode:lighten;clip-path:polygon(223.9px 126.0px,-2727.9px 661.8px,-1807.2px -2083.5px,480.2px -2863.1px);background:conic-gradient(from 291.57deg at 197.8px 419.5px,#00ff00 0deg,#00ff00 60.00deg,#08ff00 60.56deg,#11ff00 61.11deg,#1aff00 61.67deg,#23ff00 62.22deg,#2cff00 62.78deg,#35ff00 63.33deg,#3eff00 63.89deg,#48ff00 64.44deg,#52ff00 65.00deg,#5bff00 65.55deg,#66ff00 66.11deg,#70ff00 66.66deg,#7aff00 67.22deg,#85ff00 67.78deg,#90ff00 68.33deg,#9bff00 68.89deg,#a7ff00 69.44deg,#b3ff00 70.00deg,#bfff00 70.55deg,#cbff00 71.11deg,#d7ff00 71.66deg,#e4ff00 72.22deg,#f1ff00 72.77deg,#ffff00 73.33deg,#ffff00 360deg)"></div>
<div style="position:absolute;inset:0;mix-blend-mode:lighten;clip-path:polygon(223.9px 126.0px,-2727.9px 661.8px,-1807.2px -2083.5px,480.2px -2863.1px);background:conic-gradient(from 199.71deg at 508.2px 73.3px,#0000ff 0deg,#0000ff 60.00deg,#0000f1 60.67deg,#0000e3 61.34deg,#0000d6 62.02deg,#0000c9 62.69deg,#0000bd 63.36deg,#0000b1 64.03deg,#0000a5 64.70deg,#000099 65.38deg,#00008e 66.05deg,#000083 66.72deg,#000078 67.39deg,#00006e 68.07deg,#000064 68.74deg,#00005a 69.41deg,#000050 70.08deg,#000046 70.75deg,#00003d 71.43deg,#000034 72.10deg,#00002b 72.77deg,#000022 73.44deg,#000019 74.11deg,#000011 74.79deg,#000008 75.46deg,#000000 76.13deg,#000000 360deg)"></div>
<div style="position:absolute;inset:0;mix-blend-mode:lighten;clip-path:polygon(223.2px 123.9px,-2728.6px 659.7px,-33.2px 3114.1px,2253.4px 2332.5px);background:conic-gradient(from 77.41deg at 140.9px 35.8px,#ff00ff 0deg,#ff00ff 60.00deg,#ef00ff 61.42deg,#e000ff 62.85deg,#d100ff 64.27deg,#c400ff 65.69deg,#b600ff 67.12deg,#aa00ff 68.54deg,#9e00ff 69.96deg,#9200ff 71.39deg,#8700ff 72.81deg,#7c00ff 74.23deg,#7200ff 75.66deg,#6800ff 77.08deg,#5e00ff 78.50deg,#5400ff 79.93deg,#4b00ff 81.35deg,#4200ff 82.77deg,#3900ff 84.20deg,#3100ff 85.62deg,#2800ff 87.04deg,#2000ff 88.47deg,#1800ff 89.89deg,#1000ff 91.31deg,#0800ff 92.74deg,#0000ff 94.16deg,#0000ff 360deg)"></div>
<div style="position:absolute;inset:0;mix-blend-mode:lighten;clip-path:polygon(223.2px 123.9px,-2728.6px 659.7px,-33.2px 3114.1px,2253.4px 2332.5px);background:conic-gradient(from 161.88deg at 508.2px 73.3px,#000000 0deg,#000000 60.00deg,#000400 61.58deg,#000800 63.15deg,#000d00 64.73deg,#001100 66.31deg,#001600 67.88deg,#001b00 69.46deg,#002000 71.04deg,#002600 72.61deg,#002c00 74.19deg,#003300 75.76deg,#003a00 77.34deg,#004100 78.92deg,#004900 80.49deg,#005200 82.07deg,#005c00 83.65deg,#006600 85.22deg,#007200 86.80deg,#007f00 88.38deg,#008e00 89.95deg,#009e00 91.53deg,#00b100 93.11deg,#00c700 94.68deg,#00e100 96.26deg,#00ff00 97.84deg,#00ff00 360deg)"></div>
<div style="position:absolute;inset:0;background:rgba(0,0,0,0.38);clip-path:polygon(evenodd,0 0,679px 0,679px 570px,0 570px,0 0,111.2px 21.4px,559.6px 70.8px,197.8px 419.5px,111.2px 21.4px)"></div>
</div>
</div>
<svg style="left:1190px;top:90px" width="722" height="630" viewBox="1190 90 722 630">
<rect x="1334.1" y="130.2" width="14.3" height="14.3" fill="none" stroke="#fff" stroke-width="1.7"/>
<rect x="1454.1" y="143.0" width="14.3" height="14.3" fill="none" stroke="#fff" stroke-width="1.7"/>
<rect x="1429.4" y="160.3" width="14.3" height="14.3" fill="none" stroke="#fff" stroke-width="1.7"/>
<rect x="1390.5" y="171.8" width="14.3" height="14.3" fill="none" stroke="#fff" stroke-width="1.7"/>
<rect x="1426.4" y="187.5" width="14.3" height="14.3" fill="none" stroke="#fff" stroke-width="1.7"/>
<rect x="1481.6" y="159.0" width="14.3" height="14.3" fill="none" stroke="#fff" stroke-width="1.7"/>
<rect x="1510.5" y="165.0" width="14.3" height="14.3" fill="none" stroke="#fff" stroke-width="1.7"/>
<rect x="1539.8" y="178.5" width="14.3" height="14.3" fill="none" stroke="#fff" stroke-width="1.7"/>
<rect x="1553.8" y="184.5" width="14.3" height="14.3" fill="none" stroke="#fff" stroke-width="1.7"/>
<rect x="1560.6" y="171.8" width="14.3" height="14.3" fill="none" stroke="#fff" stroke-width="1.7"/>
<rect x="1567.0" y="173.0" width="14.3" height="14.3" fill="none" stroke="#fff" stroke-width="1.7"/>
<rect x="1504.5" y="188.3" width="14.3" height="14.3" fill="none" stroke="#fff" stroke-width="1.7"/>
<rect x="1485.3" y="201.5" width="14.3" height="14.3" fill="none" stroke="#fff" stroke-width="1.7"/>
<rect x="1485.3" y="211.8" width="14.3" height="14.3" fill="none" stroke="#fff" stroke-width="1.7"/>
<rect x="1504.5" y="206.7" width="14.3" height="14.3" fill="none" stroke="#fff" stroke-width="1.7"/>
<rect x="1500.2" y="198.2" width="14.3" height="14.3" fill="none" stroke="#fff" stroke-width="1.7"/>
<rect x="1519.0" y="198.2" width="14.3" height="14.3" fill="none" stroke="#fff" stroke-width="1.7"/>
<rect x="1529.2" y="195.7" width="14.3" height="14.3" fill="none" stroke="#fff" stroke-width="1.7"/>
<rect x="1525.3" y="180.2" width="14.3" height="14.3" fill="none" stroke="#fff" stroke-width="1.7"/>
<rect x="1576.8" y="220.2" width="14.3" height="14.3" fill="none" stroke="#fff" stroke-width="1.7"/>
<rect x="1397.8" y="228.0" width="14.3" height="14.3" fill="none" stroke="#fff" stroke-width="1.7"/>
<rect x="1358.8" y="249.3" width="14.3" height="14.3" fill="none" stroke="#fff" stroke-width="1.7"/>
<rect x="1376.1" y="288.2" width="14.3" height="14.3" fill="none" stroke="#fff" stroke-width="1.7"/>
<rect x="1419.6" y="280.5" width="14.3" height="14.3" fill="none" stroke="#fff" stroke-width="1.7"/>
<rect x="1441.0" y="285.2" width="14.3" height="14.3" fill="none" stroke="#fff" stroke-width="1.7"/>
<rect x="1479.1" y="309.7" width="14.3" height="14.3" fill="none" stroke="#fff" stroke-width="1.7"/>
<rect x="1421.1" y="345.2" width="14.3" height="14.3" fill="none" stroke="#fff" stroke-width="1.7"/>
<rect x="1423.6" y="407.9" width="14.3" height="14.3" fill="none" stroke="#fff" stroke-width="1.7"/>
<rect x="1549.6" y="276.9" width="14.3" height="14.3" fill="none" stroke="#fff" stroke-width="1.7"/>
<rect x="1589.9" y="366.9" width="14.3" height="14.3" fill="none" stroke="#fff" stroke-width="1.7"/>
<rect x="1653.8" y="202.8" width="14.3" height="14.3" fill="none" stroke="#fff" stroke-width="1.7"/>
<rect x="1782.8" y="179.8" width="14.3" height="14.3" fill="none" stroke="#fff" stroke-width="1.7"/>
<rect x="1420.6" y="528.9" width="14.3" height="14.3" fill="none" stroke="#fff" stroke-width="1.7"/>
<rect x="1445.3" y="234.7" width="14.2" height="14.2" fill="none" stroke="#000" stroke-width="2.2"/>
<ellipse cx="1370.3" cy="151.9" rx="4.5" ry="4.9" fill="#00ff00" stroke="#000" stroke-width="1.4"/>
<ellipse cx="1461.3" cy="161.5" rx="4.5" ry="4.9" fill="#ffff00" stroke="#000" stroke-width="1.4"/>
<ellipse cx="1436.6" cy="169.2" rx="4.5" ry="4.9" fill="#a4b058" stroke="#000" stroke-width="1.4"/>
<ellipse cx="1396.7" cy="180.4" rx="4.5" ry="4.9" fill="#6c9058" stroke="#000" stroke-width="1.4"/>
<ellipse cx="1435.0" cy="194.5" rx="4.5" ry="4.9" fill="#646c48" stroke="#000" stroke-width="1.4"/>
<ellipse cx="1490.2" cy="166.2" rx="4.5" ry="4.9" fill="#e4c050" stroke="#000" stroke-width="1.4"/>
<ellipse cx="1524.9" cy="174.0" rx="4.5" ry="4.9" fill="#d8a448" stroke="#000" stroke-width="1.4"/>
<ellipse cx="1568.3" cy="178.5" rx="4.5" ry="4.9" fill="#c8853e" stroke="#000" stroke-width="1.4"/>
<ellipse cx="1569.4" cy="182.3" rx="4.5" ry="4.9" fill="#a0622d" stroke="#000" stroke-width="1.4"/>
<ellipse cx="1535.9" cy="189.6" rx="4.5" ry="4.9" fill="#8a5a30" stroke="#000" stroke-width="1.4"/>
<ellipse cx="1543.6" cy="188.1" rx="4.5" ry="4.9" fill="#7a4a2a" stroke="#000" stroke-width="1.4"/>
<ellipse cx="1549.7" cy="194.8" rx="4.5" ry="4.9" fill="#6e3e28" stroke="#000" stroke-width="1.4"/>
<ellipse cx="1517.6" cy="195.5" rx="4.5" ry="4.9" fill="#c09060" stroke="#000" stroke-width="1.4"/>
<ellipse cx="1533.4" cy="197.6" rx="4.5" ry="4.9" fill="#c88a60" stroke="#000" stroke-width="1.4"/>
<ellipse cx="1539.3" cy="202.3" rx="4.5" ry="4.9" fill="#e8a080" stroke="#000" stroke-width="1.4"/>
<ellipse cx="1522.8" cy="201.9" rx="4.5" ry="4.9" fill="#c89060" stroke="#000" stroke-width="1.4"/>
<ellipse cx="1525.1" cy="205.7" rx="4.5" ry="4.9" fill="#c89070" stroke="#000" stroke-width="1.4"/>
<ellipse cx="1510.0" cy="205.7" rx="4.5" ry="4.9" fill="#c0906a" stroke="#000" stroke-width="1.4"/>
<ellipse cx="1505.7" cy="205.3" rx="4.5" ry="4.9" fill="#c8a080" stroke="#000" stroke-width="1.4"/>
<ellipse cx="1517.6" cy="207.0" rx="4.5" ry="4.9" fill="#c09068" stroke="#000" stroke-width="1.4"/>
<ellipse cx="1516.4" cy="201.9" rx="4.5" ry="4.9" fill="#c8957a" stroke="#000" stroke-width="1.4"/>
<ellipse cx="1496.0" cy="206.8" rx="4.5" ry="4.9" fill="#f0c8a0" stroke="#000" stroke-width="1.4"/>
<ellipse cx="1510.4" cy="212.5" rx="4.5" ry="4.9" fill="#785040" stroke="#000" stroke-width="1.4"/>
<ellipse cx="1496.0" cy="218.5" rx="4.5" ry="4.9" fill="#e8b090" stroke="#000" stroke-width="1.4"/>
<ellipse cx="1492.5" cy="216.4" rx="4.5" ry="4.9" fill="#f0c0a8" stroke="#000" stroke-width="1.4"/>
<ellipse cx="1588.4" cy="226.2" rx="4.5" ry="4.9" fill="#b85868" stroke="#000" stroke-width="1.4"/>
<ellipse cx="1403.5" cy="230.4" rx="4.5" ry="4.9" fill="#80b4a4" stroke="#000" stroke-width="1.4"/>
<ellipse cx="1386.5" cy="252.7" rx="4.5" ry="4.9" fill="#00ffff" stroke="#000" stroke-width="1.4"/>
<ellipse cx="1390.4" cy="289.2" rx="4.5" ry="4.9" fill="#3080a0" stroke="#000" stroke-width="1.4"/>
<ellipse cx="1429.3" cy="287.2" rx="4.5" ry="4.9" fill="#6080a0" stroke="#000" stroke-width="1.4"/>
<ellipse cx="1452.6" cy="290.8" rx="4.5" ry="4.9" fill="#8888b8" stroke="#000" stroke-width="1.4"/>
<ellipse cx="1453.8" cy="239.8" rx="4.5" ry="4.9" fill="#a8a8a8" stroke="#000" stroke-width="1.4"/>
<ellipse cx="1473.0" cy="322.2" rx="4.5" ry="4.9" fill="#604878" stroke="#000" stroke-width="1.4"/>
<ellipse cx="1432.5" cy="350.6" rx="4.5" ry="4.9" fill="#5060a8" stroke="#000" stroke-width="1.4"/>
<ellipse cx="1433.9" cy="406.9" rx="4.5" ry="4.9" fill="#384098" stroke="#000" stroke-width="1.4"/>
<ellipse cx="1556.4" cy="279.5" rx="4.5" ry="4.9" fill="#b05090" stroke="#000" stroke-width="1.4"/>
<ellipse cx="1575.3" cy="369.4" rx="4.5" ry="4.9" fill="#ff00ff" stroke="#000" stroke-width="1.4"/>
<ellipse cx="1653.0" cy="212.0" rx="4.5" ry="4.9" fill="#b03840" stroke="#000" stroke-width="1.4"/>
<ellipse cx="1733.0" cy="188.0" rx="4.5" ry="4.9" fill="#ff0000" stroke="#000" stroke-width="1.4"/>
<ellipse cx="1429.3" cy="540.7" rx="4.5" ry="4.9" fill="#0000ff" stroke="#000" stroke-width="1.4"/>
<ellipse cx="1501.8" cy="279.5" rx="4.6" ry="5.2" fill="#000"/>
<rect x="1229.7" y="116.8" width="679.3" height="569.7" fill="none" stroke="#a0a0a0" stroke-width="1.6"/>
<path d="M1223 687.0h7" stroke="#d0d0d0" stroke-width="1.5"/>
<text x="1222.3" y="693.7" font-size="15.3" fill="#e0e0e0" text-anchor="end">0</text>
<path d="M1230.0 687v7" stroke="#d0d0d0" stroke-width="1.5"/>
<text x="1230.0" y="711.8" font-size="15.3" fill="#e0e0e0" text-anchor="middle">0</text>
<path d="M1223 639.6h7" stroke="#d0d0d0" stroke-width="1.5"/>
<text x="1222.3" y="646.3" font-size="15.3" fill="#e0e0e0" text-anchor="end">0.05</text>
<path d="M1286.4 687v7" stroke="#d0d0d0" stroke-width="1.5"/>
<text x="1286.4" y="711.8" font-size="15.3" fill="#e0e0e0" text-anchor="middle">0.05</text>
<path d="M1223 592.2h7" stroke="#d0d0d0" stroke-width="1.5"/>
<text x="1222.3" y="599.0" font-size="15.3" fill="#e0e0e0" text-anchor="end">0.1</text>
<path d="M1342.8 687v7" stroke="#d0d0d0" stroke-width="1.5"/>
<text x="1342.8" y="711.8" font-size="15.3" fill="#e0e0e0" text-anchor="middle">0.1</text>
<path d="M1223 544.9h7" stroke="#d0d0d0" stroke-width="1.5"/>
<text x="1222.3" y="551.6" font-size="15.3" fill="#e0e0e0" text-anchor="end">0.15</text>
<path d="M1399.3 687v7" stroke="#d0d0d0" stroke-width="1.5"/>
<text x="1399.3" y="711.8" font-size="15.3" fill="#e0e0e0" text-anchor="middle">0.15</text>
<path d="M1223 497.5h7" stroke="#d0d0d0" stroke-width="1.5"/>
<text x="1222.3" y="504.2" font-size="15.3" fill="#e0e0e0" text-anchor="end">0.2</text>
<path d="M1455.7 687v7" stroke="#d0d0d0" stroke-width="1.5"/>
<text x="1455.7" y="711.8" font-size="15.3" fill="#e0e0e0" text-anchor="middle">0.2</text>
<path d="M1223 450.1h7" stroke="#d0d0d0" stroke-width="1.5"/>
<text x="1222.3" y="456.8" font-size="15.3" fill="#e0e0e0" text-anchor="end">0.25</text>
<path d="M1512.1 687v7" stroke="#d0d0d0" stroke-width="1.5"/>
<text x="1512.1" y="711.8" font-size="15.3" fill="#e0e0e0" text-anchor="middle">0.25</text>
<path d="M1223 402.7h7" stroke="#d0d0d0" stroke-width="1.5"/>
<text x="1222.3" y="409.4" font-size="15.3" fill="#e0e0e0" text-anchor="end">0.3</text>
<path d="M1568.6 687v7" stroke="#d0d0d0" stroke-width="1.5"/>
<text x="1568.6" y="711.8" font-size="15.3" fill="#e0e0e0" text-anchor="middle">0.3</text>
<path d="M1223 355.4h7" stroke="#d0d0d0" stroke-width="1.5"/>
<text x="1222.3" y="362.1" font-size="15.3" fill="#e0e0e0" text-anchor="end">0.35</text>
<path d="M1625.0 687v7" stroke="#d0d0d0" stroke-width="1.5"/>
<text x="1625.0" y="711.8" font-size="15.3" fill="#e0e0e0" text-anchor="middle">0.35</text>
<path d="M1223 308.0h7" stroke="#d0d0d0" stroke-width="1.5"/>
<text x="1222.3" y="314.7" font-size="15.3" fill="#e0e0e0" text-anchor="end">0.4</text>
<path d="M1681.4 687v7" stroke="#d0d0d0" stroke-width="1.5"/>
<text x="1681.4" y="711.8" font-size="15.3" fill="#e0e0e0" text-anchor="middle">0.4</text>
<path d="M1223 260.6h7" stroke="#d0d0d0" stroke-width="1.5"/>
<text x="1222.3" y="267.3" font-size="15.3" fill="#e0e0e0" text-anchor="end">0.45</text>
<path d="M1737.8 687v7" stroke="#d0d0d0" stroke-width="1.5"/>
<text x="1737.8" y="711.8" font-size="15.3" fill="#e0e0e0" text-anchor="middle">0.45</text>
<path d="M1223 213.2h7" stroke="#d0d0d0" stroke-width="1.5"/>
<text x="1222.3" y="219.9" font-size="15.3" fill="#e0e0e0" text-anchor="end">0.5</text>
<path d="M1794.2 687v7" stroke="#d0d0d0" stroke-width="1.5"/>
<text x="1794.2" y="711.8" font-size="15.3" fill="#e0e0e0" text-anchor="middle">0.5</text>
<path d="M1223 165.9h7" stroke="#d0d0d0" stroke-width="1.5"/>
<text x="1222.3" y="172.6" font-size="15.3" fill="#e0e0e0" text-anchor="end">0.55</text>
<path d="M1850.7 687v7" stroke="#d0d0d0" stroke-width="1.5"/>
<text x="1850.7" y="711.8" font-size="15.3" fill="#e0e0e0" text-anchor="middle">0.55</text>
</svg>
<div style="left:1690.5px;top:486.5px;width:212px;height:152px;border:2px solid #8a8a8a;background:linear-gradient(152deg,#ff8c2c 0%,#ff6a24 45%,#ff4428 100%);overflow:hidden">
<svg style="left:0;top:0" width="208" height="148" viewBox="1692.5 488.5 208 148">
<rect x="1709.3" y="521.5" width="14" height="14" fill="none" stroke="#fff" stroke-width="1.4"/>
<rect x="1843.5" y="504.7" width="14" height="14" fill="none" stroke="#fff" stroke-width="1.4"/>
<rect x="1788.7" y="554.5" width="14" height="14" fill="none" stroke="#fff" stroke-width="1.4"/>
<rect x="1802.8" y="572.0" width="14" height="14" fill="none" stroke="#fff" stroke-width="1.4"/>
<rect x="1703.2" y="576.8" width="14" height="14" fill="none" stroke="#fff" stroke-width="1.4"/>
<rect x="1713.8" y="594.0" width="14" height="14" fill="none" stroke="#fff" stroke-width="1.4"/>
<rect x="1773.0" y="594.0" width="14" height="14" fill="none" stroke="#fff" stroke-width="1.4"/>
<rect x="1686" y="577" width="7.3" height="14" fill="none" stroke="#fff" stroke-width="1.4"/>
<ellipse cx="1739.7" cy="534.0" rx="4.4" ry="4.8" fill="#c89058" stroke="#000" stroke-width="1.3"/>
<ellipse cx="1859.3" cy="525.3" rx="4.4" ry="4.8" fill="#7c5030" stroke="#000" stroke-width="1.3"/>
<ellipse cx="1892.7" cy="524.0" rx="4.4" ry="4.8" fill="#6c4428" stroke="#000" stroke-width="1.3"/>
<ellipse cx="1798.6" cy="566.8" rx="4.4" ry="4.8" fill="#d08c60" stroke="#000" stroke-width="1.3"/>
<ellipse cx="1820.0" cy="566.8" rx="4.4" ry="4.8" fill="#c88460" stroke="#000" stroke-width="1.3"/>
<ellipse cx="1885.3" cy="563.8" rx="4.4" ry="4.8" fill="#603820" stroke="#000" stroke-width="1.3"/>
<ellipse cx="1699.2" cy="571.5" rx="4.4" ry="4.8" fill="#e8a070" stroke="#000" stroke-width="1.3"/>
<ellipse cx="1693.0" cy="579.5" rx="4.4" ry="4.8" fill="#d09060" stroke="#000" stroke-width="1.3"/>
<ellipse cx="1719.4" cy="582.5" rx="4.4" ry="4.8" fill="#a87048" stroke="#000" stroke-width="1.3"/>
<ellipse cx="1720.8" cy="600.0" rx="4.4" ry="4.8" fill="#c07c54" stroke="#000" stroke-width="1.3"/>
<ellipse cx="1799.6" cy="598.5" rx="4.4" ry="4.8" fill="#f0a080" stroke="#000" stroke-width="1.3"/>
</svg></div>
<div style="left:1637.7px;top:649.7px;width:267.5px;height:31.0px;background:#333"></div>
<span class="t" style="left:1638.5px;top:656.1px;font-size:21.20px;line-height:21.20px;color:#f4f4f4;transform:scaleX(0.986);transform-origin:0 50%;">RGB Triplet: 207, 143, 102</span>
<span class="t" style="left:203.9px;top:736.9px;font-size:32.00px;line-height:32.00px;color:#f4f4f4;transform:scaleX(0.971);transform-origin:0 50%;">Avg dE2000: 1.53</span>
<span class="t" style="left:199.9px;top:784.1px;font-size:32.00px;line-height:32.00px;color:#f4f4f4;transform:scaleX(0.986);transform-origin:0 50%;">Max dE2000: 6.04</span>
<span class="t" style="left:165.5px;top:840.3px;font-size:31.60px;line-height:31.60px;color:#f4f4f4;">Current Reading</span>
<span class="t" style="left:165.5px;top:886.5px;font-size:25.60px;line-height:25.60px;color:#f4f4f4;transform:scaleX(1.030);transform-origin:0 50%;">x: 0.4499</span>
<span class="t" style="left:332.7px;top:886.5px;font-size:25.60px;line-height:25.60px;color:#f4f4f4;transform:scaleX(1.023);transform-origin:0 50%;">y: 0.3825</span>
<span class="t" style="left:166.2px;top:933.2px;font-size:25.60px;line-height:25.60px;color:#f4f4f4;transform:scaleX(1.020);transform-origin:0 50%;">fL: 33.16</span>
<span class="t" style="left:165.5px;top:972.2px;font-size:25.60px;line-height:25.60px;color:#f4f4f4;transform:scaleX(1.088);transform-origin:0 50%;">cd/m²: 113.62</span>
<div class="tbl" style="left:491px;top:745px;width:1429px;height:262px;overflow:hidden;background:#404040">
<div style="left:0;top:0;width:1429px;height:29.4px;background:linear-gradient(#393939 0,#303030 48%,#1c1c1c 52%,#202020 100%)"></div>
<div style="left:0;top:0;width:10.5px;height:29.4px;background:#000"></div>
<div style="left:0;top:29.2px;width:1429px;height:26.9px;background:#424242"></div>
<div style="left:0;top:29.2px;width:10.5px;height:26.9px;background:#2c2c2c"></div>
<div style="left:0;top:56.0px;width:1429px;height:26.9px;background:#808080"></div>
<div style="left:0;top:56.0px;width:10.5px;height:26.9px;background:#363636"></div>
<div style="left:0;top:82.8px;width:1429px;height:26.9px;background:#424242"></div>
<div style="left:0;top:82.8px;width:10.5px;height:26.9px;background:#2c2c2c"></div>
<div style="left:0;top:109.6px;width:1429px;height:26.9px;background:#808080"></div>
<div style="left:0;top:109.6px;width:10.5px;height:26.9px;background:#363636"></div>
<div style="left:0;top:136.4px;width:1429px;height:26.9px;background:#424242"></div>
<div style="left:0;top:136.4px;width:10.5px;height:26.9px;background:#2c2c2c"></div>
<div style="left:0;top:163.2px;width:1429px;height:26.9px;background:#808080"></div>
<div style="left:0;top:163.2px;width:10.5px;height:26.9px;background:#363636"></div>
<div style="left:0;top:190.0px;width:1429px;height:26.9px;background:#424242"></div>
<div style="left:0;top:190.0px;width:10.5px;height:26.9px;background:#2c2c2c"></div>
<div style="left:0;top:216.8px;width:1429px;height:26.9px;background:#808080"></div>
<div style="left:0;top:216.8px;width:10.5px;height:26.9px;background:#363636"></div>
<div style="left:667.2px;top:111.0px;width:40.5px;height:25.6px;background:#f4f4f4"></div>
<span class="t" style="left:13.0px;top:36.7px;font-size:14.80px;line-height:14.80px;color:#f0f0f0;transform:scaleX(0.745);transform-origin:0 50%;">x: CIE31</span>
<span class="t" style="left:13.0px;top:63.5px;font-size:14.80px;line-height:14.80px;color:#f0f0f0;transform:scaleX(0.745);transform-origin:0 50%;">y: CIE31</span>
<span class="t" style="left:13.0px;top:90.3px;font-size:14.80px;line-height:14.80px;color:#f0f0f0;transform:scaleX(0.745);transform-origin:0 50%;">Y</span>
<span class="t" style="left:13.0px;top:117.1px;font-size:14.80px;line-height:14.80px;color:#f0f0f0;transform:scaleX(0.745);transform-origin:0 50%;">Target x:CIE31</span>
<span class="t" style="left:13.0px;top:143.9px;font-size:14.80px;line-height:14.80px;color:#f0f0f0;transform:scaleX(0.745);transform-origin:0 50%;">Target y:CIE31</span>
<span class="t" style="left:13.0px;top:170.7px;font-size:14.80px;line-height:14.80px;color:#f0f0f0;transform:scaleX(0.745);transform-origin:0 50%;">Target Y</span>
<span class="t" style="left:13.0px;top:197.5px;font-size:14.80px;line-height:14.80px;color:#f0f0f0;transform:scaleX(0.745);transform-origin:0 50%;">ΔE 2000</span>
<span class="t" style="left:13.0px;top:224.3px;font-size:14.80px;line-height:14.80px;color:#f0f0f0;transform:scaleX(0.745);transform-origin:0 50%;">dEITP</span>
<span class="t" style="left:95.0px;top:7.5px;font-size:14.80px;line-height:14.80px;color:#fff;transform:scaleX(0.735);transform-origin:0 50%;text-shadow:0 0 .3px #fff;">White</span>
<span class="t" style="left:95.0px;top:36.7px;font-size:14.80px;line-height:14.80px;color:#f0f0f0;transform:scaleX(0.745);transform-origin:0 50%;">0.31</span>
<span class="t" style="left:95.0px;top:63.5px;font-size:14.80px;line-height:14.80px;color:#f0f0f0;transform:scaleX(0.745);transform-origin:0 50%;">0.33</span>
<span class="t" style="left:95.0px;top:90.3px;font-size:14.80px;line-height:14.80px;color:#f0f0f0;transform:scaleX(0.745);transform-origin:0 50%;">327.84</span>
<span class="t" style="left:95.0px;top:117.1px;font-size:14.80px;line-height:14.80px;color:#f0f0f0;transform:scaleX(0.745);transform-origin:0 50%;">0.31</span>
<span class="t" style="left:95.0px;top:143.9px;font-size:14.80px;line-height:14.80px;color:#f0f0f0;transform:scaleX(0.745);transform-origin:0 50%;">0.33</span>
<span class="t" style="left:95.0px;top:170.7px;font-size:14.80px;line-height:14.80px;color:#f0f0f0;transform:scaleX(0.745);transform-origin:0 50%;">327.84</span>
<span class="t" style="left:95.0px;top:197.5px;font-size:14.80px;line-height:14.80px;color:#f0f0f0;transform:scaleX(0.745);transform-origin:0 50%;">0.80</span>
<span class="t" style="left:95.0px;top:224.3px;font-size:14.80px;line-height:14.80px;color:#f0f0f0;transform:scaleX(0.745);transform-origin:0 50%;">0.91</span>
<span class="t" style="left:137.0px;top:7.5px;font-size:14.80px;line-height:14.80px;color:#fff;transform:scaleX(0.735);transform-origin:0 50%;text-shadow:0 0 .3px #fff;">Gray 80</span>
<span class="t" style="left:137.0px;top:36.7px;font-size:14.80px;line-height:14.80px;color:#f0f0f0;transform:scaleX(0.745);transform-origin:0 50%;">0.32</span>
<span class="t" style="left:137.0px;top:63.5px;font-size:14.80px;line-height:14.80px;color:#f0f0f0;transform:scaleX(0.745);transform-origin:0 50%;">0.33</span>
<span class="t" style="left:137.0px;top:90.3px;font-size:14.80px;line-height:14.80px;color:#f0f0f0;transform:scaleX(0.745);transform-origin:0 50%;">257.86</span>
<span class="t" style="left:137.0px;top:117.1px;font-size:14.80px;line-height:14.80px;color:#f0f0f0;transform:scaleX(0.745);transform-origin:0 50%;">0.31</span>
<span class="t" style="left:137.0px;top:143.9px;font-size:14.80px;line-height:14.80px;color:#f0f0f0;transform:scaleX(0.745);transform-origin:0 50%;">0.33</span>
<span class="t" style="left:137.0px;top:170.7px;font-size:14.80px;line-height:14.80px;color:#f0f0f0;transform:scaleX(0.745);transform-origin:0 50%;">261.27</span>
<span class="t" style="left:137.0px;top:197.5px;font-size:14.80px;line-height:14.80px;color:#f0f0f0;transform:scaleX(0.745);transform-origin:0 50%;">1.20</span>
<span class="t" style="left:137.0px;top:224.3px;font-size:14.80px;line-height:14.80px;color:#f0f0f0;transform:scaleX(0.745);transform-origin:0 50%;">1.76</span>
<span class="t" style="left:181.0px;top:7.5px;font-size:14.80px;line-height:14.80px;color:#fff;transform:scaleX(0.735);transform-origin:0 50%;text-shadow:0 0 .3px #fff;">Gray 65</span>
<span class="t" style="left:181.0px;top:36.7px;font-size:14.80px;line-height:14.80px;color:#f0f0f0;transform:scaleX(0.745);transform-origin:0 50%;">0.32</span>
<span class="t" style="left:181.0px;top:63.5px;font-size:14.80px;line-height:14.80px;color:#f0f0f0;transform:scaleX(0.745);transform-origin:0 50%;">0.33</span>
<span class="t" style="left:181.0px;top:90.3px;font-size:14.80px;line-height:14.80px;color:#f0f0f0;transform:scaleX(0.745);transform-origin:0 50%;">210.63</span>
<span class="t" style="left:181.0px;top:117.1px;font-size:14.80px;line-height:14.80px;color:#f0f0f0;transform:scaleX(0.745);transform-origin:0 50%;">0.31</span>
<span class="t" style="left:181.0px;top:143.9px;font-size:14.80px;line-height:14.80px;color:#f0f0f0;transform:scaleX(0.745);transform-origin:0 50%;">0.33</span>
<span class="t" style="left:181.0px;top:170.7px;font-size:14.80px;line-height:14.80px;color:#f0f0f0;transform:scaleX(0.745);transform-origin:0 50%;">211.65</span>
<span class="t" style="left:181.0px;top:197.5px;font-size:14.80px;line-height:14.80px;color:#f0f0f0;transform:scaleX(0.745);transform-origin:0 50%;">1.53</span>
<span class="t" style="left:181.0px;top:224.3px;font-size:14.80px;line-height:14.80px;color:#f0f0f0;transform:scaleX(0.745);transform-origin:0 50%;">1.93</span>
<span class="t" style="left:224.7px;top:7.5px;font-size:14.80px;line-height:14.80px;color:#fff;transform:scaleX(0.735);transform-origin:0 50%;text-shadow:0 0 .3px #fff;">Gray 50</span>
<span class="t" style="left:224.7px;top:36.7px;font-size:14.80px;line-height:14.80px;color:#f0f0f0;transform:scaleX(0.745);transform-origin:0 50%;">0.32</span>
<span class="t" style="left:224.7px;top:63.5px;font-size:14.80px;line-height:14.80px;color:#f0f0f0;transform:scaleX(0.745);transform-origin:0 50%;">0.33</span>
<span class="t" style="left:224.7px;top:90.3px;font-size:14.80px;line-height:14.80px;color:#f0f0f0;transform:scaleX(0.745);transform-origin:0 50%;">163.21</span>
<span class="t" style="left:224.7px;top:117.1px;font-size:14.80px;line-height:14.80px;color:#f0f0f0;transform:scaleX(0.745);transform-origin:0 50%;">0.31</span>
<span class="t" style="left:224.7px;top:143.9px;font-size:14.80px;line-height:14.80px;color:#f0f0f0;transform:scaleX(0.745);transform-origin:0 50%;">0.33</span>
<span class="t" style="left:224.7px;top:170.7px;font-size:14.80px;line-height:14.80px;color:#f0f0f0;transform:scaleX(0.745);transform-origin:0 50%;">163.77</span>
<span class="t" style="left:224.7px;top:197.5px;font-size:14.80px;line-height:14.80px;color:#f0f0f0;transform:scaleX(0.745);transform-origin:0 50%;">1.77</span>
<span class="t" style="left:224.7px;top:224.3px;font-size:14.80px;line-height:14.80px;color:#f0f0f0;transform:scaleX(0.745);transform-origin:0 50%;">2.09</span>
<span class="t" style="left:268.5px;top:7.5px;font-size:14.80px;line-height:14.80px;color:#fff;transform:scaleX(0.735);transform-origin:0 50%;text-shadow:0 0 .3px #fff;">Gray 35</span>
<span class="t" style="left:268.5px;top:36.7px;font-size:14.80px;line-height:14.80px;color:#f0f0f0;transform:scaleX(0.745);transform-origin:0 50%;">0.32</span>
<span class="t" style="left:268.5px;top:63.5px;font-size:14.80px;line-height:14.80px;color:#f0f0f0;transform:scaleX(0.745);transform-origin:0 50%;">0.33</span>
<span class="t" style="left:268.5px;top:90.3px;font-size:14.80px;line-height:14.80px;color:#f0f0f0;transform:scaleX(0.745);transform-origin:0 50%;">113.13</span>
<span class="t" style="left:268.5px;top:117.1px;font-size:14.80px;line-height:14.80px;color:#f0f0f0;transform:scaleX(0.745);transform-origin:0 50%;">0.31</span>
<span class="t" style="left:268.5px;top:143.9px;font-size:14.80px;line-height:14.80px;color:#f0f0f0;transform:scaleX(0.745);transform-origin:0 50%;">0.33</span>
<span class="t" style="left:268.5px;top:170.7px;font-size:14.80px;line-height:14.80px;color:#f0f0f0;transform:scaleX(0.745);transform-origin:0 50%;">114.39</span>
<span class="t" style="left:268.5px;top:197.5px;font-size:14.80px;line-height:14.80px;color:#f0f0f0;transform:scaleX(0.745);transform-origin:0 50%;">1.23</span>
<span class="t" style="left:268.5px;top:224.3px;font-size:14.80px;line-height:14.80px;color:#f0f0f0;transform:scaleX(0.745);transform-origin:0 50%;">1.75</span>
<span class="t" style="left:312.5px;top:7.5px;font-size:14.80px;line-height:14.80px;color:#fff;transform:scaleX(0.735);transform-origin:0 50%;text-shadow:0 0 .3px #fff;">Black</span>
<span class="t" style="left:312.5px;top:36.7px;font-size:14.80px;line-height:14.80px;color:#f0f0f0;transform:scaleX(0.745);transform-origin:0 50%;">0.33</span>
<span class="t" style="left:312.5px;top:63.5px;font-size:14.80px;line-height:14.80px;color:#f0f0f0;transform:scaleX(0.745);transform-origin:0 50%;">0.26</span>
<span class="t" style="left:312.5px;top:90.3px;font-size:14.80px;line-height:14.80px;color:#f0f0f0;transform:scaleX(0.745);transform-origin:0 50%;">0.03</span>
<span class="t" style="left:312.5px;top:117.1px;font-size:14.80px;line-height:14.80px;color:#f0f0f0;transform:scaleX(0.745);transform-origin:0 50%;">0.31</span>
<span class="t" style="left:312.5px;top:143.9px;font-size:14.80px;line-height:14.80px;color:#f0f0f0;transform:scaleX(0.745);transform-origin:0 50%;">0.33</span>
<span class="t" style="left:312.5px;top:170.7px;font-size:14.80px;line-height:14.80px;color:#f0f0f0;transform:scaleX(0.745);transform-origin:0 50%;">0.03</span>
<span class="t" style="left:312.5px;top:197.5px;font-size:14.80px;line-height:14.80px;color:#f0f0f0;transform:scaleX(0.745);transform-origin:0 50%;">0.20</span>
<span class="t" style="left:312.5px;top:224.3px;font-size:14.80px;line-height:14.80px;color:#f0f0f0;transform:scaleX(0.745);transform-origin:0 50%;">7.90</span>
<span class="t" style="left:344.3px;top:7.5px;font-size:14.80px;line-height:14.80px;color:#fff;transform:scaleX(0.735);transform-origin:0 50%;text-shadow:0 0 .3px #fff;">Dark Skin</span>
<span class="t" style="left:344.3px;top:36.7px;font-size:14.80px;line-height:14.80px;color:#f0f0f0;transform:scaleX(0.745);transform-origin:0 50%;">0.41</span>
<span class="t" style="left:344.3px;top:63.5px;font-size:14.80px;line-height:14.80px;color:#f0f0f0;transform:scaleX(0.745);transform-origin:0 50%;">0.36</span>
<span class="t" style="left:344.3px;top:90.3px;font-size:14.80px;line-height:14.80px;color:#f0f0f0;transform:scaleX(0.745);transform-origin:0 50%;">33.25</span>
<span class="t" style="left:344.3px;top:117.1px;font-size:14.80px;line-height:14.80px;color:#f0f0f0;transform:scaleX(0.745);transform-origin:0 50%;">0.41</span>
<span class="t" style="left:344.3px;top:143.9px;font-size:14.80px;line-height:14.80px;color:#f0f0f0;transform:scaleX(0.745);transform-origin:0 50%;">0.36</span>
<span class="t" style="left:344.3px;top:170.7px;font-size:14.80px;line-height:14.80px;color:#f0f0f0;transform:scaleX(0.745);transform-origin:0 50%;">31.99</span>
<span class="t" style="left:344.3px;top:197.5px;font-size:14.80px;line-height:14.80px;color:#f0f0f0;transform:scaleX(0.745);transform-origin:0 50%;">1.04</span>
<span class="t" style="left:344.3px;top:224.3px;font-size:14.80px;line-height:14.80px;color:#f0f0f0;transform:scaleX(0.745);transform-origin:0 50%;">2.91</span>
<span class="t" style="left:396.5px;top:7.5px;font-size:14.80px;line-height:14.80px;color:#fff;transform:scaleX(0.735);transform-origin:0 50%;text-shadow:0 0 .3px #fff;">Light Skin</span>
<span class="t" style="left:396.5px;top:36.7px;font-size:14.80px;line-height:14.80px;color:#f0f0f0;transform:scaleX(0.745);transform-origin:0 50%;">0.38</span>
<span class="t" style="left:396.5px;top:63.5px;font-size:14.80px;line-height:14.80px;color:#f0f0f0;transform:scaleX(0.745);transform-origin:0 50%;">0.36</span>
<span class="t" style="left:396.5px;top:90.3px;font-size:14.80px;line-height:14.80px;color:#f0f0f0;transform:scaleX(0.745);transform-origin:0 50%;">115.47</span>
<span class="t" style="left:396.5px;top:117.1px;font-size:14.80px;line-height:14.80px;color:#f0f0f0;transform:scaleX(0.745);transform-origin:0 50%;">0.38</span>
<span class="t" style="left:396.5px;top:143.9px;font-size:14.80px;line-height:14.80px;color:#f0f0f0;transform:scaleX(0.745);transform-origin:0 50%;">0.35</span>
<span class="t" style="left:396.5px;top:170.7px;font-size:14.80px;line-height:14.80px;color:#f0f0f0;transform:scaleX(0.745);transform-origin:0 50%;">114.29</span>
<span class="t" style="left:396.5px;top:197.5px;font-size:14.80px;line-height:14.80px;color:#f0f0f0;transform:scaleX(0.745);transform-origin:0 50%;">1.17</span>
<span class="t" style="left:396.5px;top:224.3px;font-size:14.80px;line-height:14.80px;color:#f0f0f0;transform:scaleX(0.745);transform-origin:0 50%;">3.29</span>
<span class="t" style="left:449.3px;top:7.5px;font-size:14.80px;line-height:14.80px;color:#fff;transform:scaleX(0.735);transform-origin:0 50%;text-shadow:0 0 .3px #fff;">Blue Sky</span>
<span class="t" style="left:449.3px;top:36.7px;font-size:14.80px;line-height:14.80px;color:#f0f0f0;transform:scaleX(0.745);transform-origin:0 50%;">0.25</span>
<span class="t" style="left:449.3px;top:63.5px;font-size:14.80px;line-height:14.80px;color:#f0f0f0;transform:scaleX(0.745);transform-origin:0 50%;">0.26</span>
<span class="t" style="left:449.3px;top:90.3px;font-size:14.80px;line-height:14.80px;color:#f0f0f0;transform:scaleX(0.745);transform-origin:0 50%;">61.01</span>
<span class="t" style="left:449.3px;top:117.1px;font-size:14.80px;line-height:14.80px;color:#f0f0f0;transform:scaleX(0.745);transform-origin:0 50%;">0.25</span>
<span class="t" style="left:449.3px;top:143.9px;font-size:14.80px;line-height:14.80px;color:#f0f0f0;transform:scaleX(0.745);transform-origin:0 50%;">0.27</span>
<span class="t" style="left:449.3px;top:170.7px;font-size:14.80px;line-height:14.80px;color:#f0f0f0;transform:scaleX(0.745);transform-origin:0 50%;">62.63</span>
<span class="t" style="left:449.3px;top:197.5px;font-size:14.80px;line-height:14.80px;color:#f0f0f0;transform:scaleX(0.745);transform-origin:0 50%;">2.13</span>
<span class="t" style="left:449.3px;top:224.3px;font-size:14.80px;line-height:14.80px;color:#f0f0f0;transform:scaleX(0.745);transform-origin:0 50%;">3.75</span>
<span class="t" style="left:496.6px;top:7.5px;font-size:14.80px;line-height:14.80px;color:#fff;transform:scaleX(0.735);transform-origin:0 50%;text-shadow:0 0 .3px #fff;">Foliage</span>
<span class="t" style="left:496.6px;top:36.7px;font-size:14.80px;line-height:14.80px;color:#f0f0f0;transform:scaleX(0.745);transform-origin:0 50%;">0.34</span>
<span class="t" style="left:496.6px;top:63.5px;font-size:14.80px;line-height:14.80px;color:#f0f0f0;transform:scaleX(0.745);transform-origin:0 50%;">0.43</span>
<span class="t" style="left:496.6px;top:90.3px;font-size:14.80px;line-height:14.80px;color:#f0f0f0;transform:scaleX(0.745);transform-origin:0 50%;">42.52</span>
<span class="t" style="left:496.6px;top:117.1px;font-size:14.80px;line-height:14.80px;color:#f0f0f0;transform:scaleX(0.745);transform-origin:0 50%;">0.34</span>
<span class="t" style="left:496.6px;top:143.9px;font-size:14.80px;line-height:14.80px;color:#f0f0f0;transform:scaleX(0.745);transform-origin:0 50%;">0.43</span>
<span class="t" style="left:496.6px;top:170.7px;font-size:14.80px;line-height:14.80px;color:#f0f0f0;transform:scaleX(0.745);transform-origin:0 50%;">43.12</span>
<span class="t" style="left:496.6px;top:197.5px;font-size:14.80px;line-height:14.80px;color:#f0f0f0;transform:scaleX(0.745);transform-origin:0 50%;">0.60</span>
<span class="t" style="left:496.6px;top:224.3px;font-size:14.80px;line-height:14.80px;color:#f0f0f0;transform:scaleX(0.745);transform-origin:0 50%;">1.65</span>
<span class="t" style="left:537.4px;top:7.5px;font-size:14.80px;line-height:14.80px;color:#fff;transform:scaleX(0.735);transform-origin:0 50%;text-shadow:0 0 .3px #fff;">Blue Flower</span>
<span class="t" style="left:537.4px;top:36.7px;font-size:14.80px;line-height:14.80px;color:#f0f0f0;transform:scaleX(0.745);transform-origin:0 50%;">0.27</span>
<span class="t" style="left:537.4px;top:63.5px;font-size:14.80px;line-height:14.80px;color:#f0f0f0;transform:scaleX(0.745);transform-origin:0 50%;">0.26</span>
<span class="t" style="left:537.4px;top:90.3px;font-size:14.80px;line-height:14.80px;color:#f0f0f0;transform:scaleX(0.745);transform-origin:0 50%;">76.42</span>
<span class="t" style="left:537.4px;top:117.1px;font-size:14.80px;line-height:14.80px;color:#f0f0f0;transform:scaleX(0.745);transform-origin:0 50%;">0.27</span>
<span class="t" style="left:537.4px;top:143.9px;font-size:14.80px;line-height:14.80px;color:#f0f0f0;transform:scaleX(0.745);transform-origin:0 50%;">0.25</span>
<span class="t" style="left:537.4px;top:170.7px;font-size:14.80px;line-height:14.80px;color:#f0f0f0;transform:scaleX(0.745);transform-origin:0 50%;">77.08</span>
<span class="t" style="left:537.4px;top:197.5px;font-size:14.80px;line-height:14.80px;color:#f0f0f0;transform:scaleX(0.745);transform-origin:0 50%;">1.40</span>
<span class="t" style="left:537.4px;top:224.3px;font-size:14.80px;line-height:14.80px;color:#f0f0f0;transform:scaleX(0.745);transform-origin:0 50%;">3.26</span>
<span class="t" style="left:601.6px;top:7.5px;font-size:14.80px;line-height:14.80px;color:#fff;transform:scaleX(0.735);transform-origin:0 50%;text-shadow:0 0 .3px #fff;">Bluish Green</span>
<span class="t" style="left:601.6px;top:36.7px;font-size:14.80px;line-height:14.80px;color:#f0f0f0;transform:scaleX(0.745);transform-origin:0 50%;">0.26</span>
<span class="t" style="left:601.6px;top:63.5px;font-size:14.80px;line-height:14.80px;color:#f0f0f0;transform:scaleX(0.745);transform-origin:0 50%;">0.36</span>
<span class="t" style="left:601.6px;top:90.3px;font-size:14.80px;line-height:14.80px;color:#f0f0f0;transform:scaleX(0.745);transform-origin:0 50%;">137.66</span>
<span class="t" style="left:601.6px;top:117.1px;font-size:14.80px;line-height:14.80px;color:#f0f0f0;transform:scaleX(0.745);transform-origin:0 50%;">0.26</span>
<span class="t" style="left:601.6px;top:143.9px;font-size:14.80px;line-height:14.80px;color:#f0f0f0;transform:scaleX(0.745);transform-origin:0 50%;">0.36</span>
<span class="t" style="left:601.6px;top:170.7px;font-size:14.80px;line-height:14.80px;color:#f0f0f0;transform:scaleX(0.745);transform-origin:0 50%;">138.91</span>
<span class="t" style="left:601.6px;top:197.5px;font-size:14.80px;line-height:14.80px;color:#f0f0f0;transform:scaleX(0.745);transform-origin:0 50%;">1.86</span>
<span class="t" style="left:601.6px;top:224.3px;font-size:14.80px;line-height:14.80px;color:#f0f0f0;transform:scaleX(0.745);transform-origin:0 50%;">3.16</span>
<span class="t" style="left:669.8px;top:7.5px;font-size:14.80px;line-height:14.80px;color:#fff;transform:scaleX(0.735);transform-origin:0 50%;text-shadow:0 0 .3px #fff;">Orange</span>
<span class="t" style="left:669.8px;top:36.7px;font-size:14.80px;line-height:14.80px;color:#f0f0f0;transform:scaleX(0.745);transform-origin:0 50%;">0.51</span>
<span class="t" style="left:669.8px;top:63.5px;font-size:14.80px;line-height:14.80px;color:#f0f0f0;transform:scaleX(0.745);transform-origin:0 50%;">0.41</span>
<span class="t" style="left:669.8px;top:90.3px;font-size:14.80px;line-height:14.80px;color:#f0f0f0;transform:scaleX(0.745);transform-origin:0 50%;">95.86</span>
<span class="t" style="left:669.8px;top:117.1px;font-size:14.80px;line-height:14.80px;color:#222;transform:scaleX(0.745);transform-origin:0 50%;">0.51</span>
<span class="t" style="left:669.8px;top:143.9px;font-size:14.80px;line-height:14.80px;color:#f0f0f0;transform:scaleX(0.745);transform-origin:0 50%;">0.41</span>
<span class="t" style="left:669.8px;top:170.7px;font-size:14.80px;line-height:14.80px;color:#f0f0f0;transform:scaleX(0.745);transform-origin:0 50%;">94.34</span>
<span class="t" style="left:669.8px;top:197.5px;font-size:14.80px;line-height:14.80px;color:#f0f0f0;transform:scaleX(0.745);transform-origin:0 50%;">0.43</span>
<span class="t" style="left:669.8px;top:224.3px;font-size:14.80px;line-height:14.80px;color:#f0f0f0;transform:scaleX(0.745);transform-origin:0 50%;">1.40</span>
<span class="t" style="left:712.0px;top:7.5px;font-size:14.80px;line-height:14.80px;color:#fff;transform:scaleX(0.735);transform-origin:0 50%;text-shadow:0 0 .3px #fff;">Purplish Blue</span>
<span class="t" style="left:712.0px;top:36.7px;font-size:14.80px;line-height:14.80px;color:#f0f0f0;transform:scaleX(0.745);transform-origin:0 50%;">0.22</span>
<span class="t" style="left:712.0px;top:63.5px;font-size:14.80px;line-height:14.80px;color:#f0f0f0;transform:scaleX(0.745);transform-origin:0 50%;">0.19</span>
<span class="t" style="left:712.0px;top:90.3px;font-size:14.80px;line-height:14.80px;color:#f0f0f0;transform:scaleX(0.745);transform-origin:0 50%;">38.09</span>
<span class="t" style="left:712.0px;top:117.1px;font-size:14.80px;line-height:14.80px;color:#f0f0f0;transform:scaleX(0.745);transform-origin:0 50%;">0.21</span>
<span class="t" style="left:712.0px;top:143.9px;font-size:14.80px;line-height:14.80px;color:#f0f0f0;transform:scaleX(0.745);transform-origin:0 50%;">0.19</span>
<span class="t" style="left:712.0px;top:170.7px;font-size:14.80px;line-height:14.80px;color:#f0f0f0;transform:scaleX(0.745);transform-origin:0 50%;">38.40</span>
<span class="t" style="left:712.0px;top:197.5px;font-size:14.80px;line-height:14.80px;color:#f0f0f0;transform:scaleX(0.745);transform-origin:0 50%;">1.30</span>
<span class="t" style="left:712.0px;top:224.3px;font-size:14.80px;line-height:14.80px;color:#f0f0f0;transform:scaleX(0.745);transform-origin:0 50%;">4.45</span>
<span class="t" style="left:782.5px;top:7.5px;font-size:14.80px;line-height:14.80px;color:#fff;transform:scaleX(0.735);transform-origin:0 50%;text-shadow:0 0 .3px #fff;">Moderate Red</span>
<span class="t" style="left:782.5px;top:36.7px;font-size:14.80px;line-height:14.80px;color:#f0f0f0;transform:scaleX(0.745);transform-origin:0 50%;">0.46</span>
<span class="t" style="left:782.5px;top:63.5px;font-size:14.80px;line-height:14.80px;color:#f0f0f0;transform:scaleX(0.745);transform-origin:0 50%;">0.32</span>
<span class="t" style="left:782.5px;top:90.3px;font-size:14.80px;line-height:14.80px;color:#f0f0f0;transform:scaleX(0.745);transform-origin:0 50%;">62.04</span>
<span class="t" style="left:782.5px;top:117.1px;font-size:14.80px;line-height:14.80px;color:#f0f0f0;transform:scaleX(0.745);transform-origin:0 50%;">0.46</span>
<span class="t" style="left:782.5px;top:143.9px;font-size:14.80px;line-height:14.80px;color:#f0f0f0;transform:scaleX(0.745);transform-origin:0 50%;">0.31</span>
<span class="t" style="left:782.5px;top:170.7px;font-size:14.80px;line-height:14.80px;color:#f0f0f0;transform:scaleX(0.745);transform-origin:0 50%;">61.38</span>
<span class="t" style="left:782.5px;top:197.5px;font-size:14.80px;line-height:14.80px;color:#f0f0f0;transform:scaleX(0.745);transform-origin:0 50%;">0.69</span>
<span class="t" style="left:782.5px;top:224.3px;font-size:14.80px;line-height:14.80px;color:#f0f0f0;transform:scaleX(0.745);transform-origin:0 50%;">2.99</span>
<span class="t" style="left:859.0px;top:7.5px;font-size:14.80px;line-height:14.80px;color:#fff;transform:scaleX(0.735);transform-origin:0 50%;text-shadow:0 0 .3px #fff;">Purple</span>
<span class="t" style="left:859.0px;top:36.7px;font-size:14.80px;line-height:14.80px;color:#f0f0f0;transform:scaleX(0.745);transform-origin:0 50%;">0.27</span>
<span class="t" style="left:859.0px;top:63.5px;font-size:14.80px;line-height:14.80px;color:#f0f0f0;transform:scaleX(0.745);transform-origin:0 50%;">0.22</span>
<span class="t" style="left:859.0px;top:90.3px;font-size:14.80px;line-height:14.80px;color:#f0f0f0;transform:scaleX(0.745);transform-origin:0 50%;">20.07</span>
<span class="t" style="left:859.0px;top:117.1px;font-size:14.80px;line-height:14.80px;color:#f0f0f0;transform:scaleX(0.745);transform-origin:0 50%;">0.29</span>
<span class="t" style="left:859.0px;top:143.9px;font-size:14.80px;line-height:14.80px;color:#f0f0f0;transform:scaleX(0.745);transform-origin:0 50%;">0.22</span>
<span class="t" style="left:859.0px;top:170.7px;font-size:14.80px;line-height:14.80px;color:#f0f0f0;transform:scaleX(0.745);transform-origin:0 50%;">21.60</span>
<span class="t" style="left:859.0px;top:197.5px;font-size:14.80px;line-height:14.80px;color:#f0f0f0;transform:scaleX(0.745);transform-origin:0 50%;">2.72</span>
<span class="t" style="left:859.0px;top:224.3px;font-size:14.80px;line-height:14.80px;color:#f0f0f0;transform:scaleX(0.745);transform-origin:0 50%;">12.37</span>
<span class="t" style="left:896.9px;top:7.5px;font-size:14.80px;line-height:14.80px;color:#fff;transform:scaleX(0.735);transform-origin:0 50%;text-shadow:0 0 .3px #fff;">Yellow Green</span>
<span class="t" style="left:896.9px;top:36.7px;font-size:14.80px;line-height:14.80px;color:#f0f0f0;transform:scaleX(0.745);transform-origin:0 50%;">0.38</span>
<span class="t" style="left:896.9px;top:63.5px;font-size:14.80px;line-height:14.80px;color:#f0f0f0;transform:scaleX(0.745);transform-origin:0 50%;">0.50</span>
<span class="t" style="left:896.9px;top:90.3px;font-size:14.80px;line-height:14.80px;color:#f0f0f0;transform:scaleX(0.745);transform-origin:0 50%;">142.29</span>
<span class="t" style="left:896.9px;top:117.1px;font-size:14.80px;line-height:14.80px;color:#f0f0f0;transform:scaleX(0.745);transform-origin:0 50%;">0.38</span>
<span class="t" style="left:896.9px;top:143.9px;font-size:14.80px;line-height:14.80px;color:#f0f0f0;transform:scaleX(0.745);transform-origin:0 50%;">0.50</span>
<span class="t" style="left:896.9px;top:170.7px;font-size:14.80px;line-height:14.80px;color:#f0f0f0;transform:scaleX(0.745);transform-origin:0 50%;">143.48</span>
<span class="t" style="left:896.9px;top:197.5px;font-size:14.80px;line-height:14.80px;color:#f0f0f0;transform:scaleX(0.745);transform-origin:0 50%;">0.32</span>
<span class="t" style="left:896.9px;top:224.3px;font-size:14.80px;line-height:14.80px;color:#f0f0f0;transform:scaleX(0.745);transform-origin:0 50%;">1.23</span>
<span class="t" style="left:967.4px;top:7.5px;font-size:14.80px;line-height:14.80px;color:#fff;transform:scaleX(0.735);transform-origin:0 50%;text-shadow:0 0 .3px #fff;">Orange Yellow</span>
<span class="t" style="left:967.4px;top:36.7px;font-size:14.80px;line-height:14.80px;color:#f0f0f0;transform:scaleX(0.745);transform-origin:0 50%;">0.48</span>
<span class="t" style="left:967.4px;top:63.5px;font-size:14.80px;line-height:14.80px;color:#f0f0f0;transform:scaleX(0.745);transform-origin:0 50%;">0.44</span>
<span class="t" style="left:967.4px;top:90.3px;font-size:14.80px;line-height:14.80px;color:#f0f0f0;transform:scaleX(0.745);transform-origin:0 50%;">141.35</span>
<span class="t" style="left:967.4px;top:117.1px;font-size:14.80px;line-height:14.80px;color:#f0f0f0;transform:scaleX(0.745);transform-origin:0 50%;">0.47</span>
<span class="t" style="left:967.4px;top:143.9px;font-size:14.80px;line-height:14.80px;color:#f0f0f0;transform:scaleX(0.745);transform-origin:0 50%;">0.45</span>
<span class="t" style="left:967.4px;top:170.7px;font-size:14.80px;line-height:14.80px;color:#f0f0f0;transform:scaleX(0.745);transform-origin:0 50%;">143.48</span>
<span class="t" style="left:967.4px;top:197.5px;font-size:14.80px;line-height:14.80px;color:#f0f0f0;transform:scaleX(0.745);transform-origin:0 50%;">2.37</span>
<span class="t" style="left:967.4px;top:224.3px;font-size:14.80px;line-height:14.80px;color:#f0f0f0;transform:scaleX(0.745);transform-origin:0 50%;">5.45</span>
<span class="t" style="left:1043.9px;top:7.5px;font-size:14.80px;line-height:14.80px;color:#fff;transform:scaleX(0.735);transform-origin:0 50%;text-shadow:0 0 .3px #fff;">Blue</span>
<span class="t" style="left:1043.9px;top:36.7px;font-size:14.80px;line-height:14.80px;color:#f0f0f0;transform:scaleX(0.745);transform-origin:0 50%;">0.19</span>
<span class="t" style="left:1043.9px;top:63.5px;font-size:14.80px;line-height:14.80px;color:#f0f0f0;transform:scaleX(0.745);transform-origin:0 50%;">0.14</span>
<span class="t" style="left:1043.9px;top:90.3px;font-size:14.80px;line-height:14.80px;color:#f0f0f0;transform:scaleX(0.745);transform-origin:0 50%;">19.95</span>
<span class="t" style="left:1043.9px;top:117.1px;font-size:14.80px;line-height:14.80px;color:#f0f0f0;transform:scaleX(0.745);transform-origin:0 50%;">0.19</span>
<span class="t" style="left:1043.9px;top:143.9px;font-size:14.80px;line-height:14.80px;color:#f0f0f0;transform:scaleX(0.745);transform-origin:0 50%;">0.13</span>
<span class="t" style="left:1043.9px;top:170.7px;font-size:14.80px;line-height:14.80px;color:#f0f0f0;transform:scaleX(0.745);transform-origin:0 50%;">19.75</span>
<span class="t" style="left:1043.9px;top:197.5px;font-size:14.80px;line-height:14.80px;color:#f0f0f0;transform:scaleX(0.745);transform-origin:0 50%;">0.78</span>
<span class="t" style="left:1043.9px;top:224.3px;font-size:14.80px;line-height:14.80px;color:#f0f0f0;transform:scaleX(0.745);transform-origin:0 50%;">5.34</span>
<span class="t" style="left:1079.5px;top:7.5px;font-size:14.80px;line-height:14.80px;color:#fff;transform:scaleX(0.735);transform-origin:0 50%;text-shadow:0 0 .3px #fff;">Green</span>
<span class="t" style="left:1079.5px;top:36.7px;font-size:14.80px;line-height:14.80px;color:#f0f0f0;transform:scaleX(0.745);transform-origin:0 50%;">0.31</span>
<span class="t" style="left:1079.5px;top:63.5px;font-size:14.80px;line-height:14.80px;color:#f0f0f0;transform:scaleX(0.745);transform-origin:0 50%;">0.49</span>
<span class="t" style="left:1079.5px;top:90.3px;font-size:14.80px;line-height:14.80px;color:#f0f0f0;transform:scaleX(0.745);transform-origin:0 50%;">74.13</span>
<span class="t" style="left:1079.5px;top:117.1px;font-size:14.80px;line-height:14.80px;color:#f0f0f0;transform:scaleX(0.745);transform-origin:0 50%;">0.31</span>
<span class="t" style="left:1079.5px;top:143.9px;font-size:14.80px;line-height:14.80px;color:#f0f0f0;transform:scaleX(0.745);transform-origin:0 50%;">0.49</span>
<span class="t" style="left:1079.5px;top:170.7px;font-size:14.80px;line-height:14.80px;color:#f0f0f0;transform:scaleX(0.745);transform-origin:0 50%;">75.46</span>
<span class="t" style="left:1079.5px;top:197.5px;font-size:14.80px;line-height:14.80px;color:#f0f0f0;transform:scaleX(0.745);transform-origin:0 50%;">0.71</span>
<span class="t" style="left:1079.5px;top:224.3px;font-size:14.80px;line-height:14.80px;color:#f0f0f0;transform:scaleX(0.745);transform-origin:0 50%;">2.47</span>
<span class="t" style="left:1115.9px;top:7.5px;font-size:14.80px;line-height:14.80px;color:#fff;transform:scaleX(0.735);transform-origin:0 50%;text-shadow:0 0 .3px #fff;">Red</span>
<span class="t" style="left:1115.9px;top:36.7px;font-size:14.80px;line-height:14.80px;color:#f0f0f0;transform:scaleX(0.745);transform-origin:0 50%;">0.54</span>
<span class="t" style="left:1115.9px;top:63.5px;font-size:14.80px;line-height:14.80px;color:#f0f0f0;transform:scaleX(0.745);transform-origin:0 50%;">0.32</span>
<span class="t" style="left:1115.9px;top:90.3px;font-size:14.80px;line-height:14.80px;color:#f0f0f0;transform:scaleX(0.745);transform-origin:0 50%;">39.33</span>
<span class="t" style="left:1115.9px;top:117.1px;font-size:14.80px;line-height:14.80px;color:#f0f0f0;transform:scaleX(0.745);transform-origin:0 50%;">0.55</span>
<span class="t" style="left:1115.9px;top:143.9px;font-size:14.80px;line-height:14.80px;color:#f0f0f0;transform:scaleX(0.745);transform-origin:0 50%;">0.32</span>
<span class="t" style="left:1115.9px;top:170.7px;font-size:14.80px;line-height:14.80px;color:#f0f0f0;transform:scaleX(0.745);transform-origin:0 50%;">37.50</span>
<span class="t" style="left:1115.9px;top:197.5px;font-size:14.80px;line-height:14.80px;color:#f0f0f0;transform:scaleX(0.745);transform-origin:0 50%;">0.97</span>
<span class="t" style="left:1115.9px;top:224.3px;font-size:14.80px;line-height:14.80px;color:#f0f0f0;transform:scaleX(0.745);transform-origin:0 50%;">5.76</span>
<span class="t" style="left:1151.9px;top:7.5px;font-size:14.80px;line-height:14.80px;color:#fff;transform:scaleX(0.735);transform-origin:0 50%;text-shadow:0 0 .3px #fff;">Yellow</span>
<span class="t" style="left:1151.9px;top:36.7px;font-size:14.80px;line-height:14.80px;color:#f0f0f0;transform:scaleX(0.745);transform-origin:0 50%;">0.45</span>
<span class="t" style="left:1151.9px;top:63.5px;font-size:14.80px;line-height:14.80px;color:#f0f0f0;transform:scaleX(0.745);transform-origin:0 50%;">0.48</span>
<span class="t" style="left:1151.9px;top:90.3px;font-size:14.80px;line-height:14.80px;color:#f0f0f0;transform:scaleX(0.745);transform-origin:0 50%;">194.95</span>
<span class="t" style="left:1151.9px;top:117.1px;font-size:14.80px;line-height:14.80px;color:#f0f0f0;transform:scaleX(0.745);transform-origin:0 50%;">0.45</span>
<span class="t" style="left:1151.9px;top:143.9px;font-size:14.80px;line-height:14.80px;color:#f0f0f0;transform:scaleX(0.745);transform-origin:0 50%;">0.48</span>
<span class="t" style="left:1151.9px;top:170.7px;font-size:14.80px;line-height:14.80px;color:#f0f0f0;transform:scaleX(0.745);transform-origin:0 50%;">197.05</span>
<span class="t" style="left:1151.9px;top:197.5px;font-size:14.80px;line-height:14.80px;color:#f0f0f0;transform:scaleX(0.745);transform-origin:0 50%;">0.44</span>
<span class="t" style="left:1151.9px;top:224.3px;font-size:14.80px;line-height:14.80px;color:#f0f0f0;transform:scaleX(0.745);transform-origin:0 50%;">1.13</span>
<span class="t" style="left:1193.9px;top:7.5px;font-size:14.80px;line-height:14.80px;color:#fff;transform:scaleX(0.735);transform-origin:0 50%;text-shadow:0 0 .3px #fff;">Magenta</span>
<span class="t" style="left:1193.9px;top:36.7px;font-size:14.80px;line-height:14.80px;color:#f0f0f0;transform:scaleX(0.745);transform-origin:0 50%;">0.38</span>
<span class="t" style="left:1193.9px;top:63.5px;font-size:14.80px;line-height:14.80px;color:#f0f0f0;transform:scaleX(0.745);transform-origin:0 50%;">0.25</span>
<span class="t" style="left:1193.9px;top:90.3px;font-size:14.80px;line-height:14.80px;color:#f0f0f0;transform:scaleX(0.745);transform-origin:0 50%;">61.70</span>
<span class="t" style="left:1193.9px;top:117.1px;font-size:14.80px;line-height:14.80px;color:#f0f0f0;transform:scaleX(0.745);transform-origin:0 50%;">0.37</span>
<span class="t" style="left:1193.9px;top:143.9px;font-size:14.80px;line-height:14.80px;color:#f0f0f0;transform:scaleX(0.745);transform-origin:0 50%;">0.24</span>
<span class="t" style="left:1193.9px;top:170.7px;font-size:14.80px;line-height:14.80px;color:#f0f0f0;transform:scaleX(0.745);transform-origin:0 50%;">61.66</span>
<span class="t" style="left:1193.9px;top:197.5px;font-size:14.80px;line-height:14.80px;color:#f0f0f0;transform:scaleX(0.745);transform-origin:0 50%;">1.09</span>
<span class="t" style="left:1193.9px;top:224.3px;font-size:14.80px;line-height:14.80px;color:#f0f0f0;transform:scaleX(0.745);transform-origin:0 50%;">3.04</span>
<span class="t" style="left:1244.1px;top:7.5px;font-size:14.80px;line-height:14.80px;color:#fff;transform:scaleX(0.735);transform-origin:0 50%;text-shadow:0 0 .3px #fff;">Cyan</span>
<span class="t" style="left:1244.1px;top:36.7px;font-size:14.80px;line-height:14.80px;color:#f0f0f0;transform:scaleX(0.745);transform-origin:0 50%;">0.21</span>
<span class="t" style="left:1244.1px;top:63.5px;font-size:14.80px;line-height:14.80px;color:#f0f0f0;transform:scaleX(0.745);transform-origin:0 50%;">0.27</span>
<span class="t" style="left:1244.1px;top:90.3px;font-size:14.80px;line-height:14.80px;color:#f0f0f0;transform:scaleX(0.745);transform-origin:0 50%;">62.90</span>
<span class="t" style="left:1244.1px;top:117.1px;font-size:14.80px;line-height:14.80px;color:#f0f0f0;transform:scaleX(0.745);transform-origin:0 50%;">0.20</span>
<span class="t" style="left:1244.1px;top:143.9px;font-size:14.80px;line-height:14.80px;color:#f0f0f0;transform:scaleX(0.745);transform-origin:0 50%;">0.26</span>
<span class="t" style="left:1244.1px;top:170.7px;font-size:14.80px;line-height:14.80px;color:#f0f0f0;transform:scaleX(0.745);transform-origin:0 50%;">62.33</span>
<span class="t" style="left:1244.1px;top:197.5px;font-size:14.80px;line-height:14.80px;color:#f0f0f0;transform:scaleX(0.745);transform-origin:0 50%;">1.70</span>
<span class="t" style="left:1244.1px;top:224.3px;font-size:14.80px;line-height:14.80px;color:#f0f0f0;transform:scaleX(0.745);transform-origin:0 50%;">9.12</span>
<span class="t" style="left:1279.7px;top:7.5px;font-size:14.80px;line-height:14.80px;color:#fff;transform:scaleX(0.735);transform-origin:0 50%;text-shadow:0 0 .3px #fff;">100% Red</span>
<span class="t" style="left:1279.7px;top:36.7px;font-size:14.80px;line-height:14.80px;color:#f0f0f0;transform:scaleX(0.745);transform-origin:0 50%;">0.64</span>
<span class="t" style="left:1279.7px;top:63.5px;font-size:14.80px;line-height:14.80px;color:#f0f0f0;transform:scaleX(0.745);transform-origin:0 50%;">0.33</span>
<span class="t" style="left:1279.7px;top:90.3px;font-size:14.80px;line-height:14.80px;color:#f0f0f0;transform:scaleX(0.745);transform-origin:0 50%;">72.79</span>
<span class="t" style="left:1279.7px;top:117.1px;font-size:14.80px;line-height:14.80px;color:#f0f0f0;transform:scaleX(0.745);transform-origin:0 50%;">0.68</span>
<span class="t" style="left:1279.7px;top:143.9px;font-size:14.80px;line-height:14.80px;color:#f0f0f0;transform:scaleX(0.745);transform-origin:0 50%;">0.32</span>
<span class="t" style="left:1279.7px;top:170.7px;font-size:14.80px;line-height:14.80px;color:#f0f0f0;transform:scaleX(0.745);transform-origin:0 50%;">75.10</span>
<span class="t" style="left:1279.7px;top:197.5px;font-size:14.80px;line-height:14.80px;color:#f0f0f0;transform:scaleX(0.745);transform-origin:0 50%;">6.04</span>
<span class="t" style="left:1279.7px;top:224.3px;font-size:14.80px;line-height:14.80px;color:#f0f0f0;transform:scaleX(0.745);transform-origin:0 50%;">46.15</span>
<span class="t" style="left:1334.5px;top:7.5px;font-size:14.80px;line-height:14.80px;color:#fff;transform:scaleX(0.735);transform-origin:0 50%;text-shadow:0 0 .3px #fff;">100% Green</span>
<span class="t" style="left:1334.5px;top:36.7px;font-size:14.80px;line-height:14.80px;color:#f0f0f0;transform:scaleX(0.745);transform-origin:0 50%;">0.30</span>
<span class="t" style="left:1334.5px;top:63.5px;font-size:14.80px;line-height:14.80px;color:#f0f0f0;transform:scaleX(0.745);transform-origin:0 50%;">0.60</span>
<span class="t" style="left:1334.5px;top:90.3px;font-size:14.80px;line-height:14.80px;color:#f0f0f0;transform:scaleX(0.745);transform-origin:0 50%;">236.23</span>
<span class="t" style="left:1334.5px;top:117.1px;font-size:14.80px;line-height:14.80px;color:#f0f0f0;transform:scaleX(0.745);transform-origin:0 50%;">0.27</span>
<span class="t" style="left:1334.5px;top:143.9px;font-size:14.80px;line-height:14.80px;color:#f0f0f0;transform:scaleX(0.745);transform-origin:0 50%;">0.69</span>
<span class="t" style="left:1334.5px;top:170.7px;font-size:14.80px;line-height:14.80px;color:#f0f0f0;transform:scaleX(0.745);transform-origin:0 50%;">226.79</span>
<span class="t" style="left:1334.5px;top:197.5px;font-size:14.80px;line-height:14.80px;color:#f0f0f0;transform:scaleX(0.745);transform-origin:0 50%;">5.20</span>
<span class="t" style="left:1334.5px;top:224.3px;font-size:14.80px;line-height:14.80px;color:#f0f0f0;transform:scaleX(0.745);transform-origin:0 50%;">35.52</span>
<span class="t" style="left:1400.5px;top:7.5px;font-size:14.80px;line-height:14.80px;color:#fff;transform:scaleX(0.735);transform-origin:0 50%;text-shadow:0 0 .3px #fff;">100% Blue</span>
<span class="t" style="left:1400.5px;top:36.7px;font-size:14.80px;line-height:14.80px;color:#f0f0f0;transform:scaleX(0.745);transform-origin:0 50%;">0.15</span>
<span class="t" style="left:1400.5px;top:63.5px;font-size:14.80px;line-height:14.80px;color:#f0f0f0;transform:scaleX(0.745);transform-origin:0 50%;">0.06</span>
<span class="t" style="left:1400.5px;top:90.3px;font-size:14.80px;line-height:14.80px;color:#f0f0f0;transform:scaleX(0.745);transform-origin:0 50%;">22.43</span>
<span class="t" style="left:1400.5px;top:117.1px;font-size:14.80px;line-height:14.80px;color:#f0f0f0;transform:scaleX(0.745);transform-origin:0 50%;">0.15</span>
<span class="t" style="left:1400.5px;top:143.9px;font-size:14.80px;line-height:14.80px;color:#f0f0f0;transform:scaleX(0.745);transform-origin:0 50%;">0.06</span>
<span class="t" style="left:1400.5px;top:170.7px;font-size:14.80px;line-height:14.80px;color:#f0f0f0;transform:scaleX(0.745);transform-origin:0 50%;">26.02</span>
<span class="t" style="left:1400.5px;top:197.5px;font-size:14.80px;line-height:14.80px;color:#f0f0f0;transform:scaleX(0.745);transform-origin:0 50%;">2.07</span>
<span class="t" style="left:1400.5px;top:224.3px;font-size:14.80px;line-height:14.80px;color:#f0f0f0;transform:scaleX(0.745);transform-origin:0 50%;">8.76</span>
<div style="left:10.5px;top:244.5px;width:1419px;height:17.5px;background:#5f5f5f"></div>
<div style="left:11px;top:245.5px;width:11px;height:15.5px;background:linear-gradient(#8a8a8a,#6a6a6a);border-radius:2px"></div>
<svg style="left:13px;top:248.5px" width="7" height="10"><path d="M6 0.5v9L1 5z" fill="#333"/></svg>
<div style="left:23px;top:246px;width:841.5px;height:14.2px;background:#444;border-radius:7px"></div>
<div style="left:1414px;top:245.5px;width:11px;height:15.5px;background:linear-gradient(#8a8a8a,#6a6a6a);border-radius:2px"></div>
<svg style="left:1416px;top:248.5px" width="7" height="10"><path d="M1 0.5v9L6 5z" fill="#333"/></svg>
</div>
<nav style="left:150px;top:1008px;width:1530px;height:50px">
<button style="left:1.3px;top:3.5px;width:37px;height:36px;background:linear-gradient(#8c8c8c,#787878 50%,#686868);border-radius:4px 4px 0 0;box-shadow:inset 1px 1px 0 #9c9c9c,inset -1px 0 0 #5a5a5a">
<span style="left:3.7px;top:3.5px;width:29.7px;height:17.5px;background:#ffffff;border-radius:2.5px;box-shadow:0 0 1px rgba(0,0,0,.5)"></span>
</button>
<span class="t" style="left:9.6px;top:29.8px;font-size:8.00px;line-height:8.00px;color:#111;transform:scaleX(0.970);transform-origin:50% 50%;text-shadow:0 0 .4px #111;">White</span>
<button style="left:40.3px;top:3.5px;width:37px;height:36px;background:linear-gradient(#8c8c8c,#787878 50%,#686868);border-radius:4px 4px 0 0;box-shadow:inset 1px 1px 0 #9c9c9c,inset -1px 0 0 #5a5a5a">
<span style="left:3.7px;top:3.5px;width:29.7px;height:17.5px;background:#e6e6e6;border-radius:2.5px;box-shadow:0 0 1px rgba(0,0,0,.5)"></span>
</button>
<span class="t" style="left:44.6px;top:29.8px;font-size:8.00px;line-height:8.00px;color:#111;transform:scaleX(0.970);transform-origin:50% 50%;text-shadow:0 0 .4px #111;">Gray 80</span>
<button style="left:79.3px;top:3.5px;width:37px;height:36px;background:linear-gradient(#8c8c8c,#787878 50%,#686868);border-radius:4px 4px 0 0;box-shadow:inset 1px 1px 0 #9c9c9c,inset -1px 0 0 #5a5a5a">
<span style="left:3.7px;top:3.5px;width:29.7px;height:17.5px;background:#d0d0d0;border-radius:2.5px;box-shadow:0 0 1px rgba(0,0,0,.5)"></span>
</button>
<span class="t" style="left:83.6px;top:29.8px;font-size:8.00px;line-height:8.00px;color:#111;transform:scaleX(0.970);transform-origin:50% 50%;text-shadow:0 0 .4px #111;">Gray 65</span>
<button style="left:118.3px;top:3.5px;width:37px;height:36px;background:linear-gradient(#8c8c8c,#787878 50%,#686868);border-radius:4px 4px 0 0;box-shadow:inset 1px 1px 0 #9c9c9c,inset -1px 0 0 #5a5a5a">
<span style="left:3.7px;top:3.5px;width:29.7px;height:17.5px;background:#b9b9b9;border-radius:2.5px;box-shadow:0 0 1px rgba(0,0,0,.5)"></span>
</button>
<span class="t" style="left:122.6px;top:29.8px;font-size:8.00px;line-height:8.00px;color:#111;transform:scaleX(0.970);transform-origin:50% 50%;text-shadow:0 0 .4px #111;">Gray 50</span>
<button style="left:157.3px;top:3.5px;width:37px;height:36px;background:linear-gradient(#8c8c8c,#787878 50%,#686868);border-radius:4px 4px 0 0;box-shadow:inset 1px 1px 0 #9c9c9c,inset -1px 0 0 #5a5a5a">
<span style="left:3.7px;top:3.5px;width:29.7px;height:17.5px;background:#a0a0a0;border-radius:2.5px;box-shadow:0 0 1px rgba(0,0,0,.5)"></span>
</button>
<span class="t" style="left:161.6px;top:29.8px;font-size:8.00px;line-height:8.00px;color:#111;transform:scaleX(0.970);transform-origin:50% 50%;text-shadow:0 0 .4px #111;">Gray 35</span>
<button style="left:196.3px;top:3.5px;width:37px;height:36px;background:linear-gradient(#8c8c8c,#787878 50%,#686868);border-radius:4px 4px 0 0;box-shadow:inset 1px 1px 0 #9c9c9c,inset -1px 0 0 #5a5a5a">
<span style="left:3.7px;top:3.5px;width:29.7px;height:17.5px;background:#000000;border-radius:2.5px;box-shadow:0 0 1px rgba(0,0,0,.5)"></span>
</button>
<span class="t" style="left:205.0px;top:29.8px;font-size:8.00px;line-height:8.00px;color:#111;transform:scaleX(0.970);transform-origin:50% 50%;text-shadow:0 0 .4px #111;">Black</span>
<button style="left:235.3px;top:3.5px;width:37px;height:36px;background:linear-gradient(#8c8c8c,#787878 50%,#686868);border-radius:4px 4px 0 0;box-shadow:inset 1px 1px 0 #9c9c9c,inset -1px 0 0 #5a5a5a">
<span style="left:3.7px;top:3.5px;width:29.7px;height:17.5px;background:#6f5045;border-radius:2.5px;box-shadow:0 0 1px rgba(0,0,0,.5)"></span>
</button>
<span class="t" style="left:236.5px;top:29.8px;font-size:8.00px;line-height:8.00px;color:#111;transform:scaleX(0.970);transform-origin:50% 50%;text-shadow:0 0 .4px #111;">Dark Skin</span>
<button style="left:274.3px;top:3.5px;width:37px;height:36px;background:linear-gradient(#8c8c8c,#787878 50%,#686868);border-radius:4px 4px 0 0;box-shadow:inset 1px 1px 0 #9c9c9c,inset -1px 0 0 #5a5a5a">
<span style="left:3.7px;top:3.5px;width:29.7px;height:17.5px;background:#c49886;border-radius:2.5px;box-shadow:0 0 1px rgba(0,0,0,.5)"></span>
</button>
<span class="t" style="left:275.2px;top:29.8px;font-size:8.00px;line-height:8.00px;color:#111;transform:scaleX(0.970);transform-origin:50% 50%;text-shadow:0 0 .4px #111;">Light Skin</span>
<button style="left:313.3px;top:3.5px;width:37px;height:36px;background:linear-gradient(#8c8c8c,#787878 50%,#686868);border-radius:4px 4px 0 0;box-shadow:inset 1px 1px 0 #9c9c9c,inset -1px 0 0 #5a5a5a">
<span style="left:3.7px;top:3.5px;width:29.7px;height:17.5px;background:#607a9f;border-radius:2.5px;box-shadow:0 0 1px rgba(0,0,0,.5)"></span>
</button>
<span class="t" style="left:316.0px;top:29.8px;font-size:8.00px;line-height:8.00px;color:#111;transform:scaleX(0.970);transform-origin:50% 50%;text-shadow:0 0 .4px #111;">Blue Sky</span>
<button style="left:352.3px;top:3.5px;width:37px;height:36px;background:linear-gradient(#8c8c8c,#787878 50%,#686868);border-radius:4px 4px 0 0;box-shadow:inset 1px 1px 0 #9c9c9c,inset -1px 0 0 #5a5a5a">
<span style="left:3.7px;top:3.5px;width:29.7px;height:17.5px;background:#576b42;border-radius:2.5px;box-shadow:0 0 1px rgba(0,0,0,.5)"></span>
</button>
<span class="t" style="left:357.7px;top:29.8px;font-size:8.00px;line-height:8.00px;color:#111;transform:scaleX(0.970);transform-origin:50% 50%;text-shadow:0 0 .4px #111;">Foliage</span>
<button style="left:391.3px;top:3.5px;width:37px;height:36px;background:linear-gradient(#8c8c8c,#787878 50%,#686868);border-radius:4px 4px 0 0;box-shadow:inset 1px 1px 0 #9c9c9c,inset -1px 0 0 #5a5a5a">
<span style="left:3.7px;top:3.5px;width:29.7px;height:7.5px;background:#8580b3;border-radius:2.5px;box-shadow:0 0 1px rgba(0,0,0,.5)"></span>
</button>
<span class="t" style="left:398.2px;top:21.2px;font-size:8.00px;line-height:8.00px;color:#111;transform:scaleX(0.970);transform-origin:0 50%;text-shadow:0 0 .4px #111;">Blue</span>
<span class="t" style="left:398.2px;top:30.3px;font-size:8.00px;line-height:8.00px;color:#111;transform:scaleX(0.970);transform-origin:0 50%;text-shadow:0 0 .4px #111;">Flower</span>
<button style="left:430.3px;top:3.5px;width:37px;height:36px;background:linear-gradient(#8c8c8c,#787878 50%,#686868);border-radius:4px 4px 0 0;box-shadow:inset 1px 1px 0 #9c9c9c,inset -1px 0 0 #5a5a5a">
<span style="left:3.7px;top:3.5px;width:29.7px;height:7.5px;background:#68bdaa;border-radius:2.5px;box-shadow:0 0 1px rgba(0,0,0,.5)"></span>
</button>
<span class="t" style="left:438.0px;top:21.2px;font-size:8.00px;line-height:8.00px;color:#111;transform:scaleX(0.970);transform-origin:0 50%;text-shadow:0 0 .4px #111;">Bluish</span>
<span class="t" style="left:438.0px;top:30.3px;font-size:8.00px;line-height:8.00px;color:#111;transform:scaleX(0.970);transform-origin:0 50%;text-shadow:0 0 .4px #111;">Green</span>
<button style="left:469.3px;top:3.5px;width:37px;height:36px;background:linear-gradient(#8c8c8c,#787878 50%,#686868);border-radius:4px 4px 0 0;box-shadow:inset 1px 1px 0 #9c9c9c,inset -1px 0 0 #5a5a5a">
<span style="left:3.7px;top:3.5px;width:29.7px;height:17.5px;background:#d67f2d;border-radius:2.5px;box-shadow:0 0 1px rgba(0,0,0,.5)"></span>
</button>
<span class="t" style="left:474.5px;top:29.8px;font-size:8.00px;line-height:8.00px;color:#111;transform:scaleX(0.970);transform-origin:50% 50%;text-shadow:0 0 .4px #111;">Orange</span>
<button style="left:508.3px;top:3.5px;width:37px;height:36px;background:linear-gradient(#8c8c8c,#787878 50%,#686868);border-radius:4px 4px 0 0;box-shadow:inset 1px 1px 0 #9c9c9c,inset -1px 0 0 #5a5a5a">
<span style="left:3.7px;top:3.5px;width:29.7px;height:7.5px;background:#4b5aa8;border-radius:2.5px;box-shadow:0 0 1px rgba(0,0,0,.5)"></span>
</button>
<span class="t" style="left:512.8px;top:21.2px;font-size:8.00px;line-height:8.00px;color:#111;transform:scaleX(0.970);transform-origin:0 50%;text-shadow:0 0 .4px #111;">Purplish</span>
<span class="t" style="left:512.8px;top:30.3px;font-size:8.00px;line-height:8.00px;color:#111;transform:scaleX(0.970);transform-origin:0 50%;text-shadow:0 0 .4px #111;">Blue</span>
<button style="left:547.3px;top:3.5px;width:37px;height:36px;background:linear-gradient(#8c8c8c,#787878 50%,#686868);border-radius:4px 4px 0 0;box-shadow:inset 1px 1px 0 #9c9c9c,inset -1px 0 0 #5a5a5a">
<span style="left:3.7px;top:3.5px;width:29.7px;height:7.5px;background:#c25a64;border-radius:2.5px;box-shadow:0 0 1px rgba(0,0,0,.5)"></span>
</button>
<span class="t" style="left:549.4px;top:21.2px;font-size:8.00px;line-height:8.00px;color:#111;transform:scaleX(0.970);transform-origin:0 50%;text-shadow:0 0 .4px #111;">Moderate</span>
<span class="t" style="left:549.4px;top:30.3px;font-size:8.00px;line-height:8.00px;color:#111;transform:scaleX(0.970);transform-origin:0 50%;text-shadow:0 0 .4px #111;">Red</span>
<button style="left:586.3px;top:3.5px;width:37px;height:36px;background:linear-gradient(#8c8c8c,#787878 50%,#686868);border-radius:4px 4px 0 0;box-shadow:inset 1px 1px 0 #9c9c9c,inset -1px 0 0 #5a5a5a">
<span style="left:3.7px;top:3.5px;width:29.7px;height:17.5px;background:#5b3d6e;border-radius:2.5px;box-shadow:0 0 1px rgba(0,0,0,.5)"></span>
</button>
<span class="t" style="left:593.2px;top:29.8px;font-size:8.00px;line-height:8.00px;color:#111;transform:scaleX(0.970);transform-origin:50% 50%;text-shadow:0 0 .4px #111;">Purple</span>
<button style="left:625.3px;top:3.5px;width:37px;height:36px;background:linear-gradient(#8c8c8c,#787878 50%,#686868);border-radius:4px 4px 0 0;box-shadow:inset 1px 1px 0 #9c9c9c,inset -1px 0 0 #5a5a5a">
<span style="left:3.7px;top:3.5px;width:29.7px;height:7.5px;background:#a2bd42;border-radius:2.5px;box-shadow:0 0 1px rgba(0,0,0,.5)"></span>
</button>
<span class="t" style="left:632.7px;top:21.2px;font-size:8.00px;line-height:8.00px;color:#111;transform:scaleX(0.970);transform-origin:0 50%;text-shadow:0 0 .4px #111;">Yellow</span>
<span class="t" style="left:632.7px;top:30.3px;font-size:8.00px;line-height:8.00px;color:#111;transform:scaleX(0.970);transform-origin:0 50%;text-shadow:0 0 .4px #111;">Green</span>
<button style="left:664.3px;top:3.5px;width:37px;height:36px;background:linear-gradient(#8c8c8c,#787878 50%,#686868);border-radius:4px 4px 0 0;box-shadow:inset 1px 1px 0 #9c9c9c,inset -1px 0 0 #5a5a5a">
<span style="left:3.7px;top:3.5px;width:29.7px;height:7.5px;background:#e2a332;border-radius:2.5px;box-shadow:0 0 1px rgba(0,0,0,.5)"></span>
</button>
<span class="t" style="left:669.9px;top:21.2px;font-size:8.00px;line-height:8.00px;color:#111;transform:scaleX(0.970);transform-origin:0 50%;text-shadow:0 0 .4px #111;">Orange</span>
<span class="t" style="left:669.9px;top:30.3px;font-size:8.00px;line-height:8.00px;color:#111;transform:scaleX(0.970);transform-origin:0 50%;text-shadow:0 0 .4px #111;">Yellow</span>
<button style="left:703.3px;top:3.5px;width:37px;height:36px;background:linear-gradient(#8c8c8c,#787878 50%,#686868);border-radius:4px 4px 0 0;box-shadow:inset 1px 1px 0 #9c9c9c,inset -1px 0 0 #5a5a5a">
<span style="left:3.7px;top:3.5px;width:29.7px;height:17.5px;background:#353d98;border-radius:2.5px;box-shadow:0 0 1px rgba(0,0,0,.5)"></span>
</button>
<span class="t" style="left:713.8px;top:29.8px;font-size:8.00px;line-height:8.00px;color:#111;transform:scaleX(0.970);transform-origin:50% 50%;text-shadow:0 0 .4px #111;">Blue</span>
<button style="left:742.3px;top:3.5px;width:37px;height:36px;background:linear-gradient(#8c8c8c,#787878 50%,#686868);border-radius:4px 4px 0 0;box-shadow:inset 1px 1px 0 #9c9c9c,inset -1px 0 0 #5a5a5a">
<span style="left:3.7px;top:3.5px;width:29.7px;height:17.5px;background:#4a9649;border-radius:2.5px;box-shadow:0 0 1px rgba(0,0,0,.5)"></span>
</button>
<span class="t" style="left:749.7px;top:29.8px;font-size:8.00px;line-height:8.00px;color:#111;transform:scaleX(0.970);transform-origin:50% 50%;text-shadow:0 0 .4px #111;">Green</span>
<button style="left:781.3px;top:3.5px;width:37px;height:36px;background:linear-gradient(#8c8c8c,#787878 50%,#686868);border-radius:4px 4px 0 0;box-shadow:inset 1px 1px 0 #9c9c9c,inset -1px 0 0 #5a5a5a">
<span style="left:3.7px;top:3.5px;width:29.7px;height:17.5px;background:#b0373d;border-radius:2.5px;box-shadow:0 0 1px rgba(0,0,0,.5)"></span>
</button>
<span class="t" style="left:792.5px;top:29.8px;font-size:8.00px;line-height:8.00px;color:#111;transform:scaleX(0.970);transform-origin:50% 50%;text-shadow:0 0 .4px #111;">Red</span>
<button style="left:820.3px;top:3.5px;width:37px;height:36px;background:linear-gradient(#8c8c8c,#787878 50%,#686868);border-radius:4px 4px 0 0;box-shadow:inset 1px 1px 0 #9c9c9c,inset -1px 0 0 #5a5a5a">
<span style="left:3.7px;top:3.5px;width:29.7px;height:17.5px;background:#eaca3a;border-radius:2.5px;box-shadow:0 0 1px rgba(0,0,0,.5)"></span>
</button>
<span class="t" style="left:827.4px;top:29.8px;font-size:8.00px;line-height:8.00px;color:#111;transform:scaleX(0.970);transform-origin:50% 50%;text-shadow:0 0 .4px #111;">Yellow</span>
<button style="left:859.3px;top:3.5px;width:37px;height:36px;background:linear-gradient(#8c8c8c,#787878 50%,#686868);border-radius:4px 4px 0 0;box-shadow:inset 1px 1px 0 #9c9c9c,inset -1px 0 0 #5a5a5a">
<span style="left:3.7px;top:3.5px;width:29.7px;height:17.5px;background:#ba5797;border-radius:2.5px;box-shadow:0 0 1px rgba(0,0,0,.5)"></span>
</button>
<span class="t" style="left:862.2px;top:29.8px;font-size:8.00px;line-height:8.00px;color:#111;transform:scaleX(0.970);transform-origin:50% 50%;text-shadow:0 0 .4px #111;">Magenta</span>
<button style="left:898.3px;top:3.5px;width:37px;height:36px;background:linear-gradient(#8c8c8c,#787878 50%,#686868);border-radius:4px 4px 0 0;box-shadow:inset 1px 1px 0 #9c9c9c,inset -1px 0 0 #5a5a5a">
<span style="left:3.7px;top:3.5px;width:29.7px;height:17.5px;background:#2585a6;border-radius:2.5px;box-shadow:0 0 1px rgba(0,0,0,.5)"></span>
</button>
<span class="t" style="left:907.5px;top:29.8px;font-size:8.00px;line-height:8.00px;color:#111;transform:scaleX(0.970);transform-origin:50% 50%;text-shadow:0 0 .4px #111;">Cyan</span>
<button style="left:937.3px;top:3.5px;width:37px;height:36px;background:linear-gradient(#8c8c8c,#787878 50%,#686868);border-radius:4px 4px 0 0;box-shadow:inset 1px 1px 0 #9c9c9c,inset -1px 0 0 #5a5a5a">
<span style="left:3.7px;top:3.5px;width:29.7px;height:17.5px;background:#ff0000;border-radius:2.5px;box-shadow:0 0 1px rgba(0,0,0,.5)"></span>
</button>
<span class="t" style="left:937.1px;top:29.8px;font-size:8.00px;line-height:8.00px;color:#111;transform:scaleX(0.964);transform-origin:50% 50%;text-shadow:0 0 .4px #111;">100% Red</span>
<button style="left:976.3px;top:3.5px;width:37px;height:36px;background:linear-gradient(#8c8c8c,#787878 50%,#686868);border-radius:4px 4px 0 0;box-shadow:inset 1px 1px 0 #9c9c9c,inset -1px 0 0 #5a5a5a">
<span style="left:3.7px;top:3.5px;width:29.7px;height:7.5px;background:#00ff00;border-radius:2.5px;box-shadow:0 0 1px rgba(0,0,0,.5)"></span>
</button>
<span class="t" style="left:984.0px;top:21.2px;font-size:8.00px;line-height:8.00px;color:#111;transform:scaleX(0.970);transform-origin:0 50%;text-shadow:0 0 .4px #111;">100%</span>
<span class="t" style="left:984.0px;top:30.3px;font-size:8.00px;line-height:8.00px;color:#111;transform:scaleX(0.970);transform-origin:0 50%;text-shadow:0 0 .4px #111;">Green</span>
<button style="left:1015.3px;top:3.5px;width:37px;height:36px;background:linear-gradient(#8c8c8c,#787878 50%,#686868);border-radius:4px 4px 0 0;box-shadow:inset 1px 1px 0 #9c9c9c,inset -1px 0 0 #5a5a5a">
<span style="left:3.7px;top:3.5px;width:29.7px;height:7.5px;background:#0000ff;border-radius:2.5px;box-shadow:0 0 1px rgba(0,0,0,.5)"></span>
</button>
<span class="t" style="left:1023.9px;top:21.2px;font-size:8.00px;line-height:8.00px;color:#111;transform:scaleX(0.970);transform-origin:0 50%;text-shadow:0 0 .4px #111;">100%</span>
<span class="t" style="left:1023.9px;top:30.3px;font-size:8.00px;line-height:8.00px;color:#111;transform:scaleX(0.970);transform-origin:0 50%;text-shadow:0 0 .4px #111;">Blue</span>
<button style="left:1054.3px;top:3.5px;width:37px;height:36px;background:linear-gradient(#8c8c8c,#787878 50%,#686868);border-radius:4px 4px 0 0;box-shadow:inset 1px 1px 0 #9c9c9c,inset -1px 0 0 #5a5a5a">
<span style="left:3.7px;top:3.5px;width:29.7px;height:7.5px;background:#00ffff;border-radius:2.5px;box-shadow:0 0 1px rgba(0,0,0,.5)"></span>
</button>
<span class="t" style="left:1062.9px;top:21.2px;font-size:8.00px;line-height:8.00px;color:#111;transform:scaleX(0.970);transform-origin:0 50%;text-shadow:0 0 .4px #111;">100%</span>
<span class="t" style="left:1062.9px;top:30.3px;font-size:8.00px;line-height:8.00px;color:#111;transform:scaleX(0.970);transform-origin:0 50%;text-shadow:0 0 .4px #111;">Cyan</span>
<button style="left:1093.3px;top:3.5px;width:37px;height:36px;background:linear-gradient(#8c8c8c,#787878 50%,#686868);border-radius:4px 4px 0 0;box-shadow:inset 1px 1px 0 #9c9c9c,inset -1px 0 0 #5a5a5a">
<span style="left:3.7px;top:3.5px;width:29.7px;height:7.5px;background:#ff00ff;border-radius:2.5px;box-shadow:0 0 1px rgba(0,0,0,.5)"></span>
</button>
<span class="t" style="left:1096.7px;top:21.2px;font-size:8.00px;line-height:8.00px;color:#111;transform:scaleX(0.970);transform-origin:0 50%;text-shadow:0 0 .4px #111;">100%</span>
<span class="t" style="left:1096.7px;top:30.3px;font-size:8.00px;line-height:8.00px;color:#111;transform:scaleX(0.970);transform-origin:0 50%;text-shadow:0 0 .4px #111;">Magenta</span>
<button style="left:1132.3px;top:3.5px;width:37px;height:36px;background:linear-gradient(#8c8c8c,#787878 50%,#686868);border-radius:4px 4px 0 0;box-shadow:inset 1px 1px 0 #9c9c9c,inset -1px 0 0 #5a5a5a">
<span style="left:3.7px;top:3.5px;width:29.7px;height:7.5px;background:#ffff00;border-radius:2.5px;box-shadow:0 0 1px rgba(0,0,0,.5)"></span>
</button>
<span class="t" style="left:1139.7px;top:21.2px;font-size:8.00px;line-height:8.00px;color:#111;transform:scaleX(0.970);transform-origin:0 50%;text-shadow:0 0 .4px #111;">100%</span>
<span class="t" style="left:1139.7px;top:30.3px;font-size:8.00px;line-height:8.00px;color:#111;transform:scaleX(0.970);transform-origin:0 50%;text-shadow:0 0 .4px #111;">Yellow</span>
<button style="left:1171.3px;top:3.5px;width:37px;height:36px;background:linear-gradient(#8c8c8c,#787878 50%,#686868);border-radius:4px 4px 0 0;box-shadow:inset 1px 1px 0 #9c9c9c,inset -1px 0 0 #5a5a5a">
<span style="left:3.7px;top:3.5px;width:29.7px;height:17.5px;background:#6b4226;border-radius:2.5px;box-shadow:0 0 1px rgba(0,0,0,.5)"></span>
</button>
<span class="t" style="left:1184.9px;top:29.8px;font-size:8.00px;line-height:8.00px;color:#111;transform:scaleX(0.970);transform-origin:50% 50%;text-shadow:0 0 .4px #111;">2E</span>
<button style="left:1210.3px;top:3.5px;width:37px;height:36px;background:linear-gradient(#8c8c8c,#787878 50%,#686868);border-radius:4px 4px 0 0;box-shadow:inset 1px 1px 0 #9c9c9c,inset -1px 0 0 #5a5a5a">
<span style="left:3.7px;top:3.5px;width:29.7px;height:17.5px;background:#c38c68;border-radius:2.5px;box-shadow:0 0 1px rgba(0,0,0,.5)"></span>
</button>
<span class="t" style="left:1224.1px;top:29.8px;font-size:8.00px;line-height:8.00px;color:#111;transform:scaleX(0.970);transform-origin:50% 50%;text-shadow:0 0 .4px #111;">2F</span>
<button style="left:1249.3px;top:3.5px;width:37px;height:36px;background:linear-gradient(#8c8c8c,#787878 50%,#686868);border-radius:4px 4px 0 0;box-shadow:inset 1px 1px 0 #9c9c9c,inset -1px 0 0 #5a5a5a">
<span style="left:3.7px;top:3.5px;width:29.7px;height:17.5px;background:#f7cc9c;border-radius:2.5px;box-shadow:0 0 1px rgba(0,0,0,.5)"></span>
</button>
<span class="t" style="left:1262.9px;top:29.8px;font-size:8.00px;line-height:8.00px;color:#111;transform:scaleX(0.970);transform-origin:50% 50%;text-shadow:0 0 .4px #111;">2K</span>
<button style="left:1288.3px;top:3.5px;width:37px;height:36px;background:linear-gradient(#8c8c8c,#787878 50%,#686868);border-radius:4px 4px 0 0;box-shadow:inset 1px 1px 0 #9c9c9c,inset -1px 0 0 #5a5a5a">
<span style="left:3.7px;top:3.5px;width:29.7px;height:17.5px;background:#f8cdb0;border-radius:2.5px;box-shadow:0 0 1px rgba(0,0,0,.5)"></span>
</button>
<span class="t" style="left:1301.7px;top:29.8px;font-size:8.00px;line-height:8.00px;color:#111;transform:scaleX(0.970);transform-origin:50% 50%;text-shadow:0 0 .4px #111;">5D</span>
<button style="left:1327.3px;top:3.5px;width:37px;height:36px;background:linear-gradient(#8c8c8c,#787878 50%,#686868);border-radius:4px 4px 0 0;box-shadow:inset 1px 1px 0 #9c9c9c,inset -1px 0 0 #5a5a5a">
<span style="left:3.7px;top:3.5px;width:29.7px;height:17.5px;background:#efae86;border-radius:2.5px;box-shadow:0 0 1px rgba(0,0,0,.5)"></span>
</button>
<span class="t" style="left:1340.9px;top:29.8px;font-size:8.00px;line-height:8.00px;color:#111;transform:scaleX(0.970);transform-origin:50% 50%;text-shadow:0 0 .4px #111;">7E</span>
<button style="left:1366.3px;top:3.5px;width:37px;height:36px;background:linear-gradient(#8c8c8c,#787878 50%,#686868);border-radius:4px 4px 0 0;box-shadow:inset 1px 1px 0 #9c9c9c,inset -1px 0 0 #5a5a5a">
<span style="left:3.7px;top:3.5px;width:29.7px;height:17.5px;background:#c59464;border-radius:2.5px;box-shadow:0 0 1px rgba(0,0,0,.5)"></span>
</button>
<span class="t" style="left:1380.1px;top:29.8px;font-size:8.00px;line-height:8.00px;color:#111;transform:scaleX(0.970);transform-origin:50% 50%;text-shadow:0 0 .4px #111;">7F</span>
<button style="left:1405.3px;top:3.5px;width:37px;height:36px;background:linear-gradient(#8c8c8c,#787878 50%,#686868);border-radius:4px 4px 0 0;box-shadow:inset 1px 1px 0 #9c9c9c,inset -1px 0 0 #5a5a5a">
<span style="left:3.7px;top:3.5px;width:29.7px;height:17.5px;background:#8a5d38;border-radius:2.5px;box-shadow:0 0 1px rgba(0,0,0,.5)"></span>
</button>
<span class="t" style="left:1418.5px;top:29.8px;font-size:8.00px;line-height:8.00px;color:#111;transform:scaleX(0.970);transform-origin:50% 50%;text-shadow:0 0 .4px #111;">7G</span>
<button style="left:1444.3px;top:3.5px;width:37px;height:36px;background:linear-gradient(#8c8c8c,#787878 50%,#686868);border-radius:4px 4px 0 0;box-shadow:inset 1px 1px 0 #9c9c9c,inset -1px 0 0 #5a5a5a">
<span style="left:3.7px;top:3.5px;width:29.7px;height:17.5px;background:#d2a27c;border-radius:2.5px;box-shadow:0 0 1px rgba(0,0,0,.5)"></span>
</button>
<span class="t" style="left:1457.7px;top:29.8px;font-size:8.00px;line-height:8.00px;color:#111;transform:scaleX(0.970);transform-origin:50% 50%;text-shadow:0 0 .4px #111;">7H</span>
<button style="left:1483.3px;top:3.5px;width:37px;height:36px;background:linear-gradient(#8c8c8c,#787878 50%,#686868);border-radius:4px 4px 0 0;box-shadow:inset 1px 1px 0 #9c9c9c,inset -1px 0 0 #5a5a5a">
<span style="left:3.7px;top:3.5px;width:29.7px;height:17.5px;background:#b4662a;border-radius:2.5px;box-shadow:0 0 1px rgba(0,0,0,.5)"></span>
</button>
<span class="t" style="left:1498.5px;top:29.8px;font-size:8.00px;line-height:8.00px;color:#111;transform:scaleX(0.970);transform-origin:50% 50%;text-shadow:0 0 .4px #111;">7I</span>
<div style="left:1px;top:40.6px;width:1527px;height:8.2px;background:#5c5c5c"></div>
<div style="left:1px;top:41px;width:9px;height:9px;background:#8a8a8a;border-radius:2px"></div>
<svg style="left:3px;top:42.5px" width="5" height="6"><path d="M4.5 0v6L0.5 3z" fill="#333"/></svg>
<div style="left:11px;top:41.4px;width:1253px;height:6.8px;background:#444;border-radius:4px"></div>
<div style="left:1518.5px;top:41px;width:8.5px;height:9px;background:#8a8a8a;border-radius:2px"></div>
<svg style="left:1520.5px;top:42.5px" width="5" height="6"><path d="M0.5 0v6L4.5 3z" fill="#333"/></svg>
</nav>
<div style="left:1678.0px;top:1025.0px;width:35.0px;height:33.0px;background:linear-gradient(#7a7a7a,#606060);border-radius:3px"></div>
<div style="left:1684.0px;top:1030.0px;width:23.5px;height:23.5px;border:1.6px solid #2a2a2a;border-radius:3.5px;background:linear-gradient(#b0b0b0,#8a8a8a)"></div>
<div style="left:1691.0px;top:1037.0px;width:10.0px;height:9.5px;background:#000"></div>
<div style="left:1715.0px;top:1011.5px;width:33.5px;height:22.5px;background:linear-gradient(#7e7e7e,#6a6a6a);border-right:1px solid #4a4a4a"><div style="left:9px;top:6px;width:14px;height:14px;border-radius:50%;background:radial-gradient(circle,#5a5a5a,#686868 70%,#747474)"></div></div>
<div style="left:1749.0px;top:1011.5px;width:33.5px;height:22.5px;background:linear-gradient(#7e7e7e,#6a6a6a);border-right:1px solid #4a4a4a"><div style="left:9px;top:6px;width:14px;height:14px;border-radius:50%;background:radial-gradient(circle,#5a5a5a,#686868 70%,#747474)"></div></div>
<div style="left:1783.0px;top:1011.5px;width:33.5px;height:22.5px;background:linear-gradient(#7e7e7e,#6a6a6a);border-right:1px solid #4a4a4a"><div style="left:9px;top:6px;width:14px;height:14px;border-radius:50%;background:radial-gradient(circle,#5a5a5a,#686868 70%,#747474)"></div></div>
<div style="left:1817.0px;top:1011.5px;width:33.5px;height:22.5px;background:linear-gradient(#7e7e7e,#6a6a6a);border-right:1px solid #4a4a4a"><div style="left:9px;top:6px;width:14px;height:14px;border-radius:50%;background:radial-gradient(circle,#5a5a5a,#686868 70%,#747474)"></div></div>
<div style="left:1851.0px;top:1011.5px;width:69.0px;height:22.5px;background:#3a3a3a"></div>
<div style="left:1885.0px;top:1011.5px;width:1.0px;height:22.5px;background:#2e2e2e"></div>
<button style="left:1714.8px;top:1035.0px;width:101.6px;height:23.0px;background:linear-gradient(#a6a6a6,#8c8c8c 50%,#7a7a7a);border-radius:3px 0 0 0;border-right:1px solid #5c5c5c;box-shadow:inset 0 1px 0 #c0c0c0"></button>
<button style="left:1816.4px;top:1035.0px;width:101.6px;height:23.0px;background:linear-gradient(#a6a6a6,#8c8c8c 50%,#7a7a7a);border-radius:0 3px 0 0;box-shadow:inset 0 1px 0 #c0c0c0"></button>
<span class="t" style="left:1757.8px;top:1036.0px;font-size:18.60px;line-height:18.60px;color:#2a2a2a;transform:scaleX(0.900);transform-origin:0 50%;text-shadow:0 0 .5px #2a2a2a;">Back</span>
<span class="t" style="left:1837.4px;top:1036.0px;font-size:18.60px;line-height:18.60px;color:#2a2a2a;transform:scaleX(1.009);transform-origin:0 50%;text-shadow:0 0 .5px #2a2a2a;">Next</span>
<div style="left:1730.4px;top:1038.5px;width:15.0px;height:15.0px;border-radius:50%;background:radial-gradient(circle at 50% 40%,#a8a8a8,#969696 60%,#7c7c7c)"></div>
<svg style="left:1731.9px;top:1040.5px" width="12" height="11" viewBox="-6 -5.5 12 11" role="img"><title>previous</title><path d="M3.6 -4.2L-0.2 0L3.6 4.2M-0.2 -4.2L-4.0 0L-0.2 4.2" fill="none" stroke="#303030" stroke-width="1.5"/></svg>
<div style="left:1890.1px;top:1038.5px;width:15.0px;height:15.0px;border-radius:50%;background:radial-gradient(circle at 50% 40%,#a8a8a8,#969696 60%,#7c7c7c)"></div>
<svg style="left:1891.6px;top:1040.5px" width="12" height="11" viewBox="-6 -5.5 12 11" role="img"><title>next</title><path d="M-3.6 -4.2L0.2 0L-3.6 4.2M0.2 -4.2L4.0 0L0.2 4.2" fill="none" stroke="#303030" stroke-width="1.5"/></svg>
<svg style="left:1620px;top:985px" width="300" height="73" viewBox="1620 985 300 73">
<g fill="none" stroke-linejoin="round" stroke-linecap="round">
<path d="M1632.2 997.2L1669.2 1005.6L1670.6 1027L1697 1032.6L1656.6 1044.8L1634 1031.6Z" stroke="#f0f0f0" stroke-opacity=".5" stroke-width="6.4"/>
<path d="M1632.2 997.2L1669.2 1005.6L1670.6 1027L1697 1032.6L1656.6 1044.8L1634 1031.6Z" stroke="#8a222c" stroke-opacity=".82" stroke-width="3.4"/>
<path d="M1640.5 1028.8L1667 1026.3" stroke="#fff" stroke-opacity=".55" stroke-width="2.2"/>
<path d="M1642.6 1009.4L1655 1023L1674 996" stroke="#f0f0f0" stroke-opacity=".6" stroke-width="5.6"/>
<path d="M1642.6 1009.4L1655 1023L1674 996" stroke="#343434" stroke-opacity=".9" stroke-width="3"/>
</g>
<text x="1677.6" y="1025.2" font-size="26.5" font-weight="bold" textLength="145.5" lengthAdjust="spacingAndGlyphs" fill="#8a222c" fill-opacity=".82" stroke="#f4f4f4" stroke-opacity=".55" stroke-width="3" paint-order="stroke">NOTEBOOK</text>
<text x="1825" y="1025.2" font-size="26.5" textLength="88.5" lengthAdjust="spacingAndGlyphs" fill="#242424" fill-opacity=".88" stroke="#f0f0f0" stroke-opacity=".55" stroke-width="3.2" paint-order="stroke">CHECK</text>
<text x="1825" y="1025.2" font-size="26.5" textLength="88.5" lengthAdjust="spacingAndGlyphs" fill="none" stroke="#242424" stroke-opacity=".85" stroke-width="1.1">CHECK</text>
</svg>
</body></html>
